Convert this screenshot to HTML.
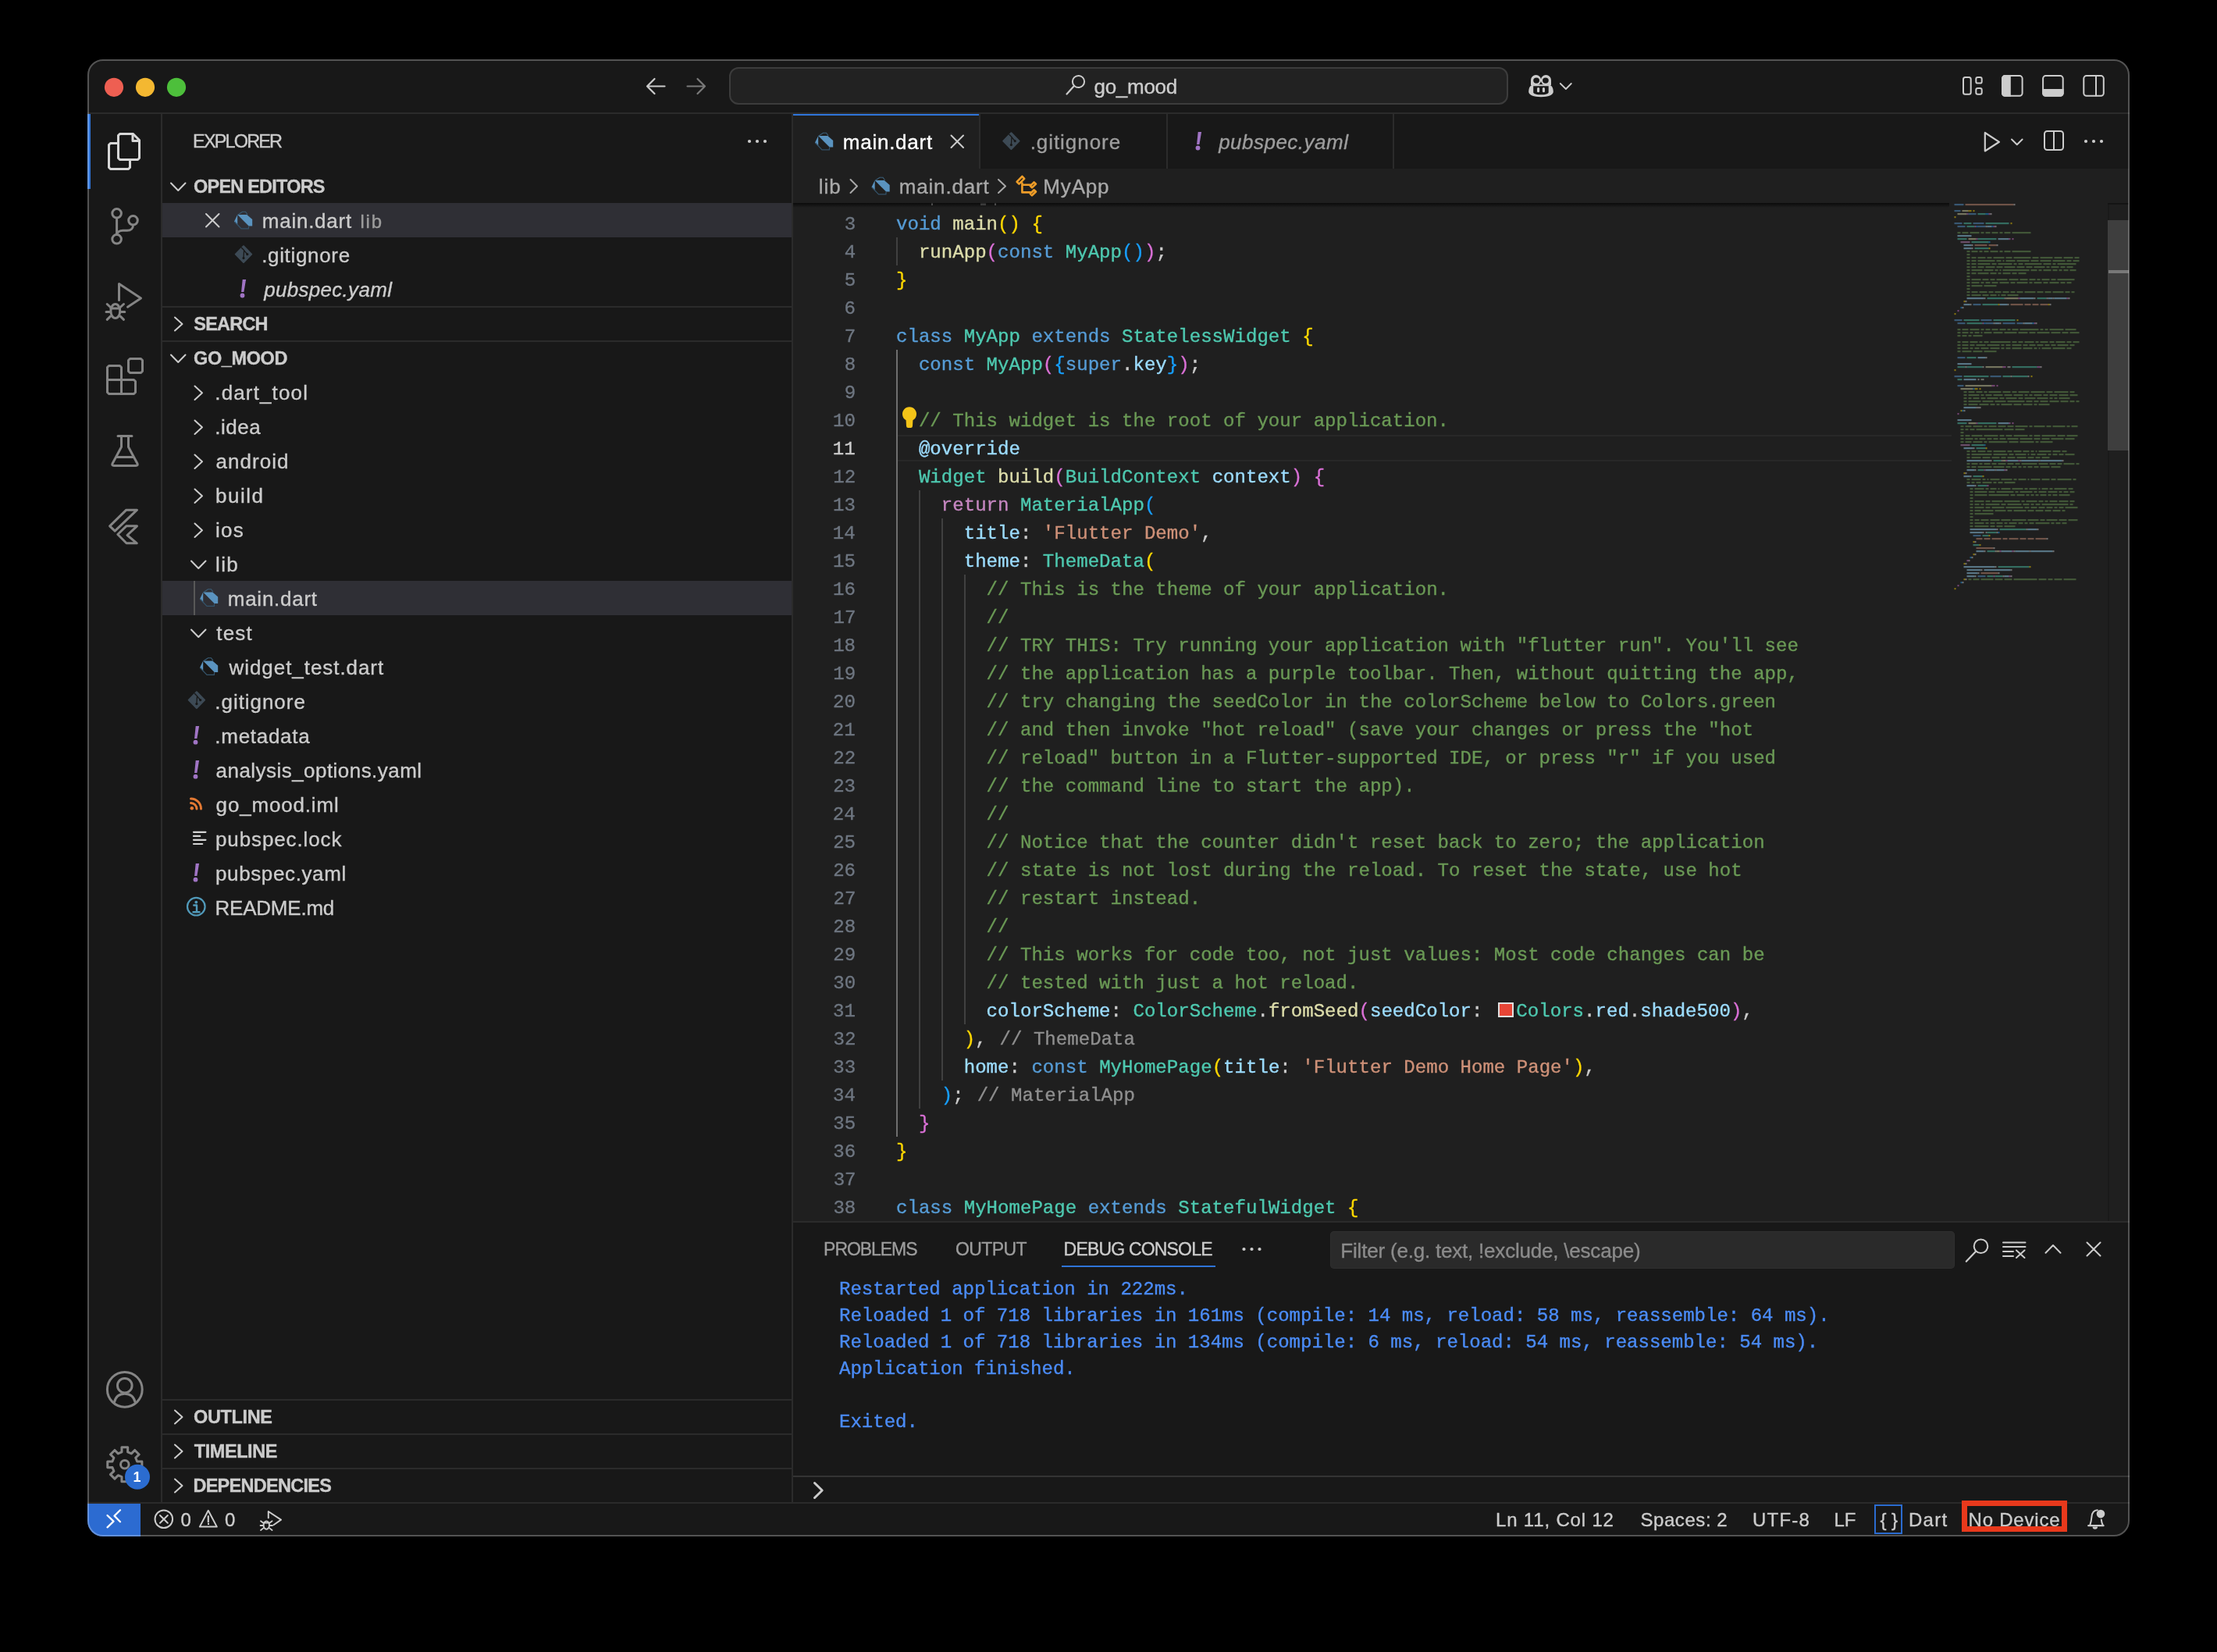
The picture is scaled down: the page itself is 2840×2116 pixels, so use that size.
<!DOCTYPE html><html><head><meta charset="utf-8"><style>

html,body{margin:0;padding:0;background:#000;}
body{width:2840px;height:2116px;overflow:hidden;position:relative;font-kerning:none;}
#win{position:absolute;left:0;top:0;width:2840px;height:2116px;clip-path:inset(76px 112px 148px 112px round 20px);will-change:transform;}
#win div{position:absolute;white-space:pre;}
#ov{position:absolute;left:0;top:0;}
.cd,.cd span{-webkit-text-stroke:0.35px currentColor;}
#bord{position:absolute;left:112px;top:76px;width:2616px;height:1892px;border-radius:20px;box-sizing:border-box;border:2px solid rgba(255,255,255,0.26);}

</style></head><body><div id="win">
<div style="left:112px;top:76px;width:2616px;height:1892px;background:#181818;"></div>
<div style="left:112px;top:144px;width:2616px;height:2px;background:#2B2B2B;"></div>
<div style="left:934px;top:86px;width:994px;height:44px;border:2px solid #3C3C3C;border-radius:12px;background:#222222;box-sizing:content-box"></div>
<div style="left:1401.51px;top:95.50px;font:normal 400 26px/30px 'Liberation Sans', sans-serif;color:#CCCCCC;letter-spacing:-0.275px;-webkit-text-stroke:0.35px #CCCCCC;">go_mood</div>
<div style="left:206px;top:146px;width:2px;height:1778px;background:#2B2B2B;"></div>
<div style="left:112px;top:146px;width:4px;height:96px;background:#2F74D9;"></div>
<div style="left:1014px;top:146px;width:2px;height:1778px;background:#2B2B2B;"></div>
<div style="left:247.07px;top:168.20px;font:normal 400 23.5px/26px 'Liberation Sans', sans-serif;color:#CCCCCC;letter-spacing:-1.853px;-webkit-text-stroke:0.35px #CCCCCC;">EXPLORER</div>
<div style="left:248.04px;top:225.90px;font:normal 700 23.5px/26px 'Liberation Sans', sans-serif;color:#CCCCCC;letter-spacing:-0.791px;-webkit-text-stroke:0.35px #CCCCCC;">OPEN EDITORS</div>
<div style="left:208px;top:260px;width:806px;height:44px;background:#2F2F35;"></div>
<div style="left:335.77px;top:268.00px;font:normal 400 26px/30px 'Liberation Sans', sans-serif;color:#CCCCCC;letter-spacing:0.755px;-webkit-text-stroke:0.35px #CCCCCC;">main.dart</div>
<div style="left:461.38px;top:270.00px;font:normal 400 24px/27px 'Liberation Sans', sans-serif;color:#9D9D9D;letter-spacing:1.807px;-webkit-text-stroke:0.35px #9D9D9D;">lib</div>
<div style="left:335.13px;top:312.00px;font:normal 400 26px/30px 'Liberation Sans', sans-serif;color:#CCCCCC;letter-spacing:0.675px;-webkit-text-stroke:0.35px #CCCCCC;">.gitignore</div>
<div style="left:338.15px;top:356.00px;font:italic 400 26px/30px 'Liberation Sans', sans-serif;color:#CCCCCC;letter-spacing:0.305px;-webkit-text-stroke:0.35px #CCCCCC;">pubspec.yaml</div>
<div style="left:208px;top:392px;width:806px;height:2px;background:#2B2B2B;"></div>
<div style="left:248.32px;top:401.90px;font:normal 700 23.5px/26px 'Liberation Sans', sans-serif;color:#CCCCCC;letter-spacing:-0.794px;-webkit-text-stroke:0.35px #CCCCCC;">SEARCH</div>
<div style="left:208px;top:436px;width:806px;height:2px;background:#2B2B2B;"></div>
<div style="left:248.04px;top:445.90px;font:normal 700 23.5px/26px 'Liberation Sans', sans-serif;color:#CCCCCC;letter-spacing:-0.380px;-webkit-text-stroke:0.35px #CCCCCC;">GO_MOOD</div>
<div style="left:275.33px;top:487.60px;font:normal 400 26px/30px 'Liberation Sans', sans-serif;color:#CCCCCC;letter-spacing:1.134px;-webkit-text-stroke:0.35px #CCCCCC;">.dart_tool</div>
<div style="left:275.33px;top:531.60px;font:normal 400 26px/30px 'Liberation Sans', sans-serif;color:#CCCCCC;letter-spacing:0.499px;-webkit-text-stroke:0.35px #CCCCCC;">.idea</div>
<div style="left:276.60px;top:575.60px;font:normal 400 26px/30px 'Liberation Sans', sans-serif;color:#CCCCCC;letter-spacing:1.008px;-webkit-text-stroke:0.35px #CCCCCC;">android</div>
<div style="left:276.02px;top:619.60px;font:normal 400 26px/30px 'Liberation Sans', sans-serif;color:#CCCCCC;letter-spacing:1.530px;-webkit-text-stroke:0.35px #CCCCCC;">build</div>
<div style="left:275.96px;top:663.60px;font:normal 400 26px/30px 'Liberation Sans', sans-serif;color:#CCCCCC;letter-spacing:1.221px;-webkit-text-stroke:0.35px #CCCCCC;">ios</div>
<div style="left:275.95px;top:707.60px;font:normal 400 26px/30px 'Liberation Sans', sans-serif;color:#CCCCCC;letter-spacing:1.416px;-webkit-text-stroke:0.35px #CCCCCC;">lib</div>
<div style="left:208px;top:744px;width:806px;height:44px;background:#2F2F35;"></div>
<div style="left:248px;top:744px;width:2px;height:44px;background:#585858;"></div>
<div style="left:291.77px;top:751.60px;font:normal 400 26px/30px 'Liberation Sans', sans-serif;color:#CCCCCC;letter-spacing:0.742px;-webkit-text-stroke:0.35px #CCCCCC;">main.dart</div>
<div style="left:277.31px;top:795.60px;font:normal 400 26px/30px 'Liberation Sans', sans-serif;color:#CCCCCC;letter-spacing:1.159px;-webkit-text-stroke:0.35px #CCCCCC;">test</div>
<div style="left:293.54px;top:839.60px;font:normal 400 26px/30px 'Liberation Sans', sans-serif;color:#CCCCCC;letter-spacing:0.940px;-webkit-text-stroke:0.35px #CCCCCC;">widget_test.dart</div>
<div style="left:275.33px;top:883.60px;font:normal 400 26px/30px 'Liberation Sans', sans-serif;color:#CCCCCC;letter-spacing:0.952px;-webkit-text-stroke:0.35px #CCCCCC;">.gitignore</div>
<div style="left:275.33px;top:927.60px;font:normal 400 26px/30px 'Liberation Sans', sans-serif;color:#CCCCCC;letter-spacing:0.718px;-webkit-text-stroke:0.35px #CCCCCC;">.metadata</div>
<div style="left:276.60px;top:971.60px;font:normal 400 26px/30px 'Liberation Sans', sans-serif;color:#CCCCCC;letter-spacing:0.455px;-webkit-text-stroke:0.35px #CCCCCC;">analysis_options.yaml</div>
<div style="left:276.61px;top:1015.60px;font:normal 400 26px/30px 'Liberation Sans', sans-serif;color:#CCCCCC;letter-spacing:0.828px;-webkit-text-stroke:0.35px #CCCCCC;">go_mood.iml</div>
<div style="left:276.02px;top:1059.60px;font:normal 400 26px/30px 'Liberation Sans', sans-serif;color:#CCCCCC;letter-spacing:0.880px;-webkit-text-stroke:0.35px #CCCCCC;">pubspec.lock</div>
<div style="left:276.02px;top:1103.60px;font:normal 400 26px/30px 'Liberation Sans', sans-serif;color:#CCCCCC;letter-spacing:0.618px;-webkit-text-stroke:0.35px #CCCCCC;">pubspec.yaml</div>
<div style="left:275.57px;top:1147.60px;font:normal 400 26px/30px 'Liberation Sans', sans-serif;color:#CCCCCC;letter-spacing:-0.234px;-webkit-text-stroke:0.35px #CCCCCC;">README.md</div>
<div style="left:208px;top:1792px;width:806px;height:2px;background:#2B2B2B;"></div>
<div style="left:248.04px;top:1801.90px;font:normal 700 23.5px/26px 'Liberation Sans', sans-serif;color:#CCCCCC;letter-spacing:-0.375px;-webkit-text-stroke:0.35px #CCCCCC;">OUTLINE</div>
<div style="left:208px;top:1836px;width:806px;height:2px;background:#2B2B2B;"></div>
<div style="left:248.74px;top:1845.90px;font:normal 700 23.5px/26px 'Liberation Sans', sans-serif;color:#CCCCCC;letter-spacing:-0.426px;-webkit-text-stroke:0.35px #CCCCCC;">TIMELINE</div>
<div style="left:208px;top:1880px;width:806px;height:2px;background:#2B2B2B;"></div>
<div style="left:247.43px;top:1889.90px;font:normal 700 23.5px/26px 'Liberation Sans', sans-serif;color:#CCCCCC;letter-spacing:-0.722px;-webkit-text-stroke:0.35px #CCCCCC;">DEPENDENCIES</div>
<div style="left:1016px;top:146px;width:238px;height:70px;background:#1F1F1F;"></div>
<div style="left:1016px;top:146px;width:238px;height:2px;background:#2F74D9;"></div>
<div style="left:1254px;top:146px;width:2px;height:70px;background:#2B2B2B;"></div>
<div style="left:1494px;top:146px;width:2px;height:70px;background:#2B2B2B;"></div>
<div style="left:1784px;top:146px;width:2px;height:70px;background:#2B2B2B;"></div>
<div style="left:1079.77px;top:166.50px;font:normal 400 26px/30px 'Liberation Sans', sans-serif;color:#FFFFFF;letter-spacing:0.755px;-webkit-text-stroke:0.35px #FFFFFF;">main.dart</div>
<div style="left:1319.63px;top:166.50px;font:normal 400 26px/30px 'Liberation Sans', sans-serif;color:#9D9D9D;letter-spacing:0.952px;-webkit-text-stroke:0.35px #9D9D9D;">.gitignore</div>
<div style="left:1561.15px;top:166.50px;font:italic 400 26px/30px 'Liberation Sans', sans-serif;color:#9D9D9D;letter-spacing:0.486px;-webkit-text-stroke:0.35px #9D9D9D;">pubspec.yaml</div>
<div style="left:1016px;top:216px;width:1712px;height:44px;background:#1F1F1F;"></div>
<div style="left:1048.75px;top:224.00px;font:normal 400 26px/30px 'Liberation Sans', sans-serif;color:#A9A9A9;letter-spacing:0.916px;-webkit-text-stroke:0.35px #A9A9A9;">lib</div>
<div style="left:1151.77px;top:224.00px;font:normal 400 26px/30px 'Liberation Sans', sans-serif;color:#A9A9A9;letter-spacing:0.817px;-webkit-text-stroke:0.35px #A9A9A9;">main.dart</div>
<div style="left:1336.37px;top:224.00px;font:normal 400 26px/30px 'Liberation Sans', sans-serif;color:#A9A9A9;letter-spacing:0.826px;-webkit-text-stroke:0.35px #A9A9A9;">MyApp</div>
<div style="left:1016px;top:260px;width:1712px;height:1304px;background:#1F1F1F;"></div>
<div style="left:1148px;top:557px;width:1352px;height:2px;background:#282828;"></div>
<div style="left:1148px;top:589px;width:1352px;height:2px;background:#282828;"></div>
<div style="left:1148px;top:304px;width:2px;height:36px;background:#404040;"></div>
<div style="left:1148px;top:448px;width:2px;height:1008px;background:#6F6F6F;"></div>
<div style="left:1177px;top:628px;width:2px;height:792px;background:#404040;"></div>
<div style="left:1206px;top:664px;width:2px;height:720px;background:#404040;"></div>
<div style="left:1235px;top:736px;width:2px;height:576px;background:#404040;"></div>
<div style="left:1081.77px;top:274.00px;font:normal 400 24.08px/27px 'Liberation Mono', monospace;color:#6E7681;letter-spacing:0.000px;-webkit-text-stroke:0.35px #6E7681;">3</div>
<div style="left:1081.76px;top:310.00px;font:normal 400 24.08px/27px 'Liberation Mono', monospace;color:#6E7681;letter-spacing:0.000px;-webkit-text-stroke:0.35px #6E7681;">4</div>
<div style="left:1081.77px;top:346.00px;font:normal 400 24.08px/27px 'Liberation Mono', monospace;color:#6E7681;letter-spacing:0.000px;-webkit-text-stroke:0.35px #6E7681;">5</div>
<div style="left:1081.54px;top:382.00px;font:normal 400 24.08px/27px 'Liberation Mono', monospace;color:#6E7681;letter-spacing:0.000px;-webkit-text-stroke:0.35px #6E7681;">6</div>
<div style="left:1081.77px;top:418.00px;font:normal 400 24.08px/27px 'Liberation Mono', monospace;color:#6E7681;letter-spacing:0.000px;-webkit-text-stroke:0.35px #6E7681;">7</div>
<div style="left:1081.77px;top:454.00px;font:normal 400 24.08px/27px 'Liberation Mono', monospace;color:#6E7681;letter-spacing:0.000px;-webkit-text-stroke:0.35px #6E7681;">8</div>
<div style="left:1081.76px;top:490.00px;font:normal 400 24.08px/27px 'Liberation Mono', monospace;color:#6E7681;letter-spacing:0.000px;-webkit-text-stroke:0.35px #6E7681;">9</div>
<div style="left:1067.04px;top:526.00px;font:normal 400 24.08px/27px 'Liberation Mono', monospace;color:#6E7681;letter-spacing:0.000px;-webkit-text-stroke:0.35px #6E7681;">10</div>
<div style="left:1066.72px;top:562.00px;font:normal 400 24.08px/27px 'Liberation Mono', monospace;color:#CCCCCC;letter-spacing:0.000px;-webkit-text-stroke:0.35px #CCCCCC;">11</div>
<div style="left:1067.26px;top:598.00px;font:normal 400 24.08px/27px 'Liberation Mono', monospace;color:#6E7681;letter-spacing:0.000px;-webkit-text-stroke:0.35px #6E7681;">12</div>
<div style="left:1067.09px;top:634.00px;font:normal 400 24.08px/27px 'Liberation Mono', monospace;color:#6E7681;letter-spacing:0.000px;-webkit-text-stroke:0.35px #6E7681;">13</div>
<div style="left:1066.78px;top:670.00px;font:normal 400 24.08px/27px 'Liberation Mono', monospace;color:#6E7681;letter-spacing:0.000px;-webkit-text-stroke:0.35px #6E7681;">14</div>
<div style="left:1067.09px;top:706.00px;font:normal 400 24.08px/27px 'Liberation Mono', monospace;color:#6E7681;letter-spacing:0.000px;-webkit-text-stroke:0.35px #6E7681;">15</div>
<div style="left:1067.12px;top:742.00px;font:normal 400 24.08px/27px 'Liberation Mono', monospace;color:#6E7681;letter-spacing:0.000px;-webkit-text-stroke:0.35px #6E7681;">16</div>
<div style="left:1067.44px;top:778.00px;font:normal 400 24.08px/27px 'Liberation Mono', monospace;color:#6E7681;letter-spacing:0.000px;-webkit-text-stroke:0.35px #6E7681;">17</div>
<div style="left:1067.15px;top:814.00px;font:normal 400 24.08px/27px 'Liberation Mono', monospace;color:#6E7681;letter-spacing:0.000px;-webkit-text-stroke:0.35px #6E7681;">18</div>
<div style="left:1067.23px;top:850.00px;font:normal 400 24.08px/27px 'Liberation Mono', monospace;color:#6E7681;letter-spacing:0.000px;-webkit-text-stroke:0.35px #6E7681;">19</div>
<div style="left:1067.09px;top:886.00px;font:normal 400 24.08px/27px 'Liberation Mono', monospace;color:#6E7681;letter-spacing:0.000px;-webkit-text-stroke:0.35px #6E7681;">20</div>
<div style="left:1066.77px;top:922.00px;font:normal 400 24.08px/27px 'Liberation Mono', monospace;color:#6E7681;letter-spacing:0.000px;-webkit-text-stroke:0.35px #6E7681;">21</div>
<div style="left:1067.31px;top:958.00px;font:normal 400 24.08px/27px 'Liberation Mono', monospace;color:#6E7681;letter-spacing:0.000px;-webkit-text-stroke:0.35px #6E7681;">22</div>
<div style="left:1067.13px;top:994.00px;font:normal 400 24.08px/27px 'Liberation Mono', monospace;color:#6E7681;letter-spacing:0.000px;-webkit-text-stroke:0.35px #6E7681;">23</div>
<div style="left:1066.83px;top:1030.00px;font:normal 400 24.08px/27px 'Liberation Mono', monospace;color:#6E7681;letter-spacing:0.000px;-webkit-text-stroke:0.35px #6E7681;">24</div>
<div style="left:1067.13px;top:1066.00px;font:normal 400 24.08px/27px 'Liberation Mono', monospace;color:#6E7681;letter-spacing:0.000px;-webkit-text-stroke:0.35px #6E7681;">25</div>
<div style="left:1067.17px;top:1102.00px;font:normal 400 24.08px/27px 'Liberation Mono', monospace;color:#6E7681;letter-spacing:0.000px;-webkit-text-stroke:0.35px #6E7681;">26</div>
<div style="left:1067.49px;top:1138.00px;font:normal 400 24.08px/27px 'Liberation Mono', monospace;color:#6E7681;letter-spacing:0.000px;-webkit-text-stroke:0.35px #6E7681;">27</div>
<div style="left:1067.19px;top:1174.00px;font:normal 400 24.08px/27px 'Liberation Mono', monospace;color:#6E7681;letter-spacing:0.000px;-webkit-text-stroke:0.35px #6E7681;">28</div>
<div style="left:1067.28px;top:1210.00px;font:normal 400 24.08px/27px 'Liberation Mono', monospace;color:#6E7681;letter-spacing:0.000px;-webkit-text-stroke:0.35px #6E7681;">29</div>
<div style="left:1067.28px;top:1246.00px;font:normal 400 24.08px/27px 'Liberation Mono', monospace;color:#6E7681;letter-spacing:0.000px;-webkit-text-stroke:0.35px #6E7681;">30</div>
<div style="left:1066.96px;top:1282.00px;font:normal 400 24.08px/27px 'Liberation Mono', monospace;color:#6E7681;letter-spacing:0.000px;-webkit-text-stroke:0.35px #6E7681;">31</div>
<div style="left:1067.50px;top:1318.00px;font:normal 400 24.08px/27px 'Liberation Mono', monospace;color:#6E7681;letter-spacing:0.000px;-webkit-text-stroke:0.35px #6E7681;">32</div>
<div style="left:1067.32px;top:1354.00px;font:normal 400 24.08px/27px 'Liberation Mono', monospace;color:#6E7681;letter-spacing:0.000px;-webkit-text-stroke:0.35px #6E7681;">33</div>
<div style="left:1067.02px;top:1390.00px;font:normal 400 24.08px/27px 'Liberation Mono', monospace;color:#6E7681;letter-spacing:0.000px;-webkit-text-stroke:0.35px #6E7681;">34</div>
<div style="left:1067.32px;top:1426.00px;font:normal 400 24.08px/27px 'Liberation Mono', monospace;color:#6E7681;letter-spacing:0.000px;-webkit-text-stroke:0.35px #6E7681;">35</div>
<div style="left:1067.36px;top:1462.00px;font:normal 400 24.08px/27px 'Liberation Mono', monospace;color:#6E7681;letter-spacing:0.000px;-webkit-text-stroke:0.35px #6E7681;">36</div>
<div style="left:1067.68px;top:1498.00px;font:normal 400 24.08px/27px 'Liberation Mono', monospace;color:#6E7681;letter-spacing:0.000px;-webkit-text-stroke:0.35px #6E7681;">37</div>
<div style="left:1067.38px;top:1534.00px;font:normal 400 24.08px/27px 'Liberation Mono', monospace;color:#6E7681;letter-spacing:0.000px;-webkit-text-stroke:0.35px #6E7681;">38</div>
<div class="cd" style="left:1148.0px;top:274.0px;font:400 24.08px/27px 'Liberation Mono', monospace;color:#CCCCCC"><span style="color:#569CD6">void</span> <span style="color:#DCDCAA">main</span><span style="color:#FFD700">(</span><span style="color:#FFD700">)</span> <span style="color:#FFD700">{</span></div>
<div class="cd" style="left:1148.0px;top:310.0px;font:400 24.08px/27px 'Liberation Mono', monospace;color:#CCCCCC">  <span style="color:#DCDCAA">runApp</span><span style="color:#DA70D6">(</span><span style="color:#569CD6">const</span> <span style="color:#4EC9B0">MyApp</span><span style="color:#179FFF">(</span><span style="color:#179FFF">)</span><span style="color:#DA70D6">)</span><span style="color:#CCCCCC">;</span></div>
<div class="cd" style="left:1148.0px;top:346.0px;font:400 24.08px/27px 'Liberation Mono', monospace;color:#CCCCCC"><span style="color:#FFD700">}</span></div>
<div class="cd" style="left:1148.0px;top:382.0px;font:400 24.08px/27px 'Liberation Mono', monospace;color:#CCCCCC"></div>
<div class="cd" style="left:1148.0px;top:418.0px;font:400 24.08px/27px 'Liberation Mono', monospace;color:#CCCCCC"><span style="color:#569CD6">class</span> <span style="color:#4EC9B0">MyApp</span> <span style="color:#569CD6">extends</span> <span style="color:#4EC9B0">StatelessWidget</span> <span style="color:#FFD700">{</span></div>
<div class="cd" style="left:1148.0px;top:454.0px;font:400 24.08px/27px 'Liberation Mono', monospace;color:#CCCCCC">  <span style="color:#569CD6">const</span> <span style="color:#4EC9B0">MyApp</span><span style="color:#DA70D6">(</span><span style="color:#179FFF">{</span><span style="color:#569CD6">super</span><span style="color:#CCCCCC">.</span><span style="color:#9CDCFE">key</span><span style="color:#179FFF">}</span><span style="color:#DA70D6">)</span><span style="color:#CCCCCC">;</span></div>
<div class="cd" style="left:1148.0px;top:490.0px;font:400 24.08px/27px 'Liberation Mono', monospace;color:#CCCCCC"></div>
<div class="cd" style="left:1148.0px;top:526.0px;font:400 24.08px/27px 'Liberation Mono', monospace;color:#CCCCCC">  <span style="color:#6A9955">// This widget is the root of your application.</span></div>
<div class="cd" style="left:1148.0px;top:562.0px;font:400 24.08px/27px 'Liberation Mono', monospace;color:#CCCCCC">  <span style="color:#9CDCFE">@override</span></div>
<div class="cd" style="left:1148.0px;top:598.0px;font:400 24.08px/27px 'Liberation Mono', monospace;color:#CCCCCC">  <span style="color:#4EC9B0">Widget</span> <span style="color:#DCDCAA">build</span><span style="color:#DA70D6">(</span><span style="color:#4EC9B0">BuildContext</span> <span style="color:#9CDCFE">context</span><span style="color:#DA70D6">)</span> <span style="color:#DA70D6">{</span></div>
<div class="cd" style="left:1148.0px;top:634.0px;font:400 24.08px/27px 'Liberation Mono', monospace;color:#CCCCCC">    <span style="color:#C586C0">return</span> <span style="color:#4EC9B0">MaterialApp</span><span style="color:#179FFF">(</span></div>
<div class="cd" style="left:1148.0px;top:670.0px;font:400 24.08px/27px 'Liberation Mono', monospace;color:#CCCCCC">      <span style="color:#9CDCFE">title</span><span style="color:#CCCCCC">:</span> <span style="color:#CE9178">'Flutter Demo'</span><span style="color:#CCCCCC">,</span></div>
<div class="cd" style="left:1148.0px;top:706.0px;font:400 24.08px/27px 'Liberation Mono', monospace;color:#CCCCCC">      <span style="color:#9CDCFE">theme</span><span style="color:#CCCCCC">:</span> <span style="color:#4EC9B0">ThemeData</span><span style="color:#FFD700">(</span></div>
<div class="cd" style="left:1148.0px;top:742.0px;font:400 24.08px/27px 'Liberation Mono', monospace;color:#CCCCCC">        <span style="color:#6A9955">// This is the theme of your application.</span></div>
<div class="cd" style="left:1148.0px;top:778.0px;font:400 24.08px/27px 'Liberation Mono', monospace;color:#CCCCCC">        <span style="color:#6A9955">//</span></div>
<div class="cd" style="left:1148.0px;top:814.0px;font:400 24.08px/27px 'Liberation Mono', monospace;color:#CCCCCC">        <span style="color:#6A9955">// TRY THIS: Try running your application with "flutter run". You'll see</span></div>
<div class="cd" style="left:1148.0px;top:850.0px;font:400 24.08px/27px 'Liberation Mono', monospace;color:#CCCCCC">        <span style="color:#6A9955">// the application has a purple toolbar. Then, without quitting the app,</span></div>
<div class="cd" style="left:1148.0px;top:886.0px;font:400 24.08px/27px 'Liberation Mono', monospace;color:#CCCCCC">        <span style="color:#6A9955">// try changing the seedColor in the colorScheme below to Colors.green</span></div>
<div class="cd" style="left:1148.0px;top:922.0px;font:400 24.08px/27px 'Liberation Mono', monospace;color:#CCCCCC">        <span style="color:#6A9955">// and then invoke "hot reload" (save your changes or press the "hot</span></div>
<div class="cd" style="left:1148.0px;top:958.0px;font:400 24.08px/27px 'Liberation Mono', monospace;color:#CCCCCC">        <span style="color:#6A9955">// reload" button in a Flutter-supported IDE, or press "r" if you used</span></div>
<div class="cd" style="left:1148.0px;top:994.0px;font:400 24.08px/27px 'Liberation Mono', monospace;color:#CCCCCC">        <span style="color:#6A9955">// the command line to start the app).</span></div>
<div class="cd" style="left:1148.0px;top:1030.0px;font:400 24.08px/27px 'Liberation Mono', monospace;color:#CCCCCC">        <span style="color:#6A9955">//</span></div>
<div class="cd" style="left:1148.0px;top:1066.0px;font:400 24.08px/27px 'Liberation Mono', monospace;color:#CCCCCC">        <span style="color:#6A9955">// Notice that the counter didn't reset back to zero; the application</span></div>
<div class="cd" style="left:1148.0px;top:1102.0px;font:400 24.08px/27px 'Liberation Mono', monospace;color:#CCCCCC">        <span style="color:#6A9955">// state is not lost during the reload. To reset the state, use hot</span></div>
<div class="cd" style="left:1148.0px;top:1138.0px;font:400 24.08px/27px 'Liberation Mono', monospace;color:#CCCCCC">        <span style="color:#6A9955">// restart instead.</span></div>
<div class="cd" style="left:1148.0px;top:1174.0px;font:400 24.08px/27px 'Liberation Mono', monospace;color:#CCCCCC">        <span style="color:#6A9955">//</span></div>
<div class="cd" style="left:1148.0px;top:1210.0px;font:400 24.08px/27px 'Liberation Mono', monospace;color:#CCCCCC">        <span style="color:#6A9955">// This works for code too, not just values: Most code changes can be</span></div>
<div class="cd" style="left:1148.0px;top:1246.0px;font:400 24.08px/27px 'Liberation Mono', monospace;color:#CCCCCC">        <span style="color:#6A9955">// tested with just a hot reload.</span></div>
<div class="cd" style="left:1148.0px;top:1282.0px;font:400 24.08px/27px 'Liberation Mono', monospace;color:#CCCCCC">        <span style="color:#9CDCFE">colorScheme</span><span style="color:#CCCCCC">:</span> <span style="color:#4EC9B0">ColorScheme</span><span style="color:#CCCCCC">.</span><span style="color:#DCDCAA">fromSeed</span><span style="color:#DA70D6">(</span><span style="color:#9CDCFE">seedColor</span><span style="color:#CCCCCC">:</span> </div>
<div style="left:1918.6px;top:1283.5px;width:20.200000000000045px;height:19.0px;background:#E74536;border:2px solid #E0E0E0;box-sizing:border-box"></div>
<div class="cd" style="left:1942.35px;top:1282.0px;font:400 24.08px/27px 'Liberation Mono', monospace;color:#CCCCCC"><span style="color:#4EC9B0">Colors</span><span style="color:#CCCCCC">.</span><span style="color:#9CDCFE">red</span><span style="color:#CCCCCC">.</span><span style="color:#9CDCFE">shade500</span><span style="color:#DA70D6">)</span><span style="color:#CCCCCC">,</span></div>
<div class="cd" style="left:1148.0px;top:1318.0px;font:400 24.08px/27px 'Liberation Mono', monospace;color:#CCCCCC">      <span style="color:#FFD700">)</span><span style="color:#CCCCCC">,</span> <span style="color:#8F8F8F;margin-left:2.5px">// ThemeData</span></div>
<div class="cd" style="left:1148.0px;top:1354.0px;font:400 24.08px/27px 'Liberation Mono', monospace;color:#CCCCCC">      <span style="color:#9CDCFE">home</span><span style="color:#CCCCCC">:</span> <span style="color:#569CD6">const</span> <span style="color:#4EC9B0">MyHomePage</span><span style="color:#FFD700">(</span><span style="color:#9CDCFE">title</span><span style="color:#CCCCCC">:</span> <span style="color:#CE9178">'Flutter Demo Home Page'</span><span style="color:#FFD700">)</span><span style="color:#CCCCCC">,</span></div>
<div class="cd" style="left:1148.0px;top:1390.0px;font:400 24.08px/27px 'Liberation Mono', monospace;color:#CCCCCC">    <span style="color:#179FFF">)</span><span style="color:#CCCCCC">;</span> <span style="color:#8F8F8F;margin-left:2.5px">// MaterialApp</span></div>
<div class="cd" style="left:1148.0px;top:1426.0px;font:400 24.08px/27px 'Liberation Mono', monospace;color:#CCCCCC">  <span style="color:#DA70D6">}</span></div>
<div class="cd" style="left:1148.0px;top:1462.0px;font:400 24.08px/27px 'Liberation Mono', monospace;color:#CCCCCC"><span style="color:#FFD700">}</span></div>
<div class="cd" style="left:1148.0px;top:1498.0px;font:400 24.08px/27px 'Liberation Mono', monospace;color:#CCCCCC"></div>
<div class="cd" style="left:1148.0px;top:1534.0px;font:400 24.08px/27px 'Liberation Mono', monospace;color:#CCCCCC"><span style="color:#569CD6">class</span> <span style="color:#4EC9B0">MyHomePage</span> <span style="color:#569CD6">extends</span> <span style="color:#4EC9B0">StatefulWidget</span> <span style="color:#FFD700">{</span></div>
<div style="left:1163.2px;top:541.2px;width:3.599999999999909px;height:4.599999999999909px;background:#1F1F1F;"></div>
<div style="left:1192.5px;top:260px;width:2.0px;height:3px;background:#8A8A8A;"></div>
<div style="left:1256px;top:260px;width:7px;height:2.5px;background:#6A6A6A;"></div>
<div style="left:1273.5px;top:260px;width:2.0px;height:3px;background:#8A8A8A;"></div>
<div style="left:1016px;top:260px;width:1481px;height:6px;background:linear-gradient(#000000aa,#00000000)"></div>
<div style="left:2700px;top:260px;width:1.5px;height:1304px;background:#1A1A1A;"></div>
<div style="left:2700px;top:260px;width:27px;height:1.5px;background:#141414;"></div>
<div style="left:2700px;top:281.8px;width:27px;height:295.2px;background:#3E3E3E;"></div>
<div style="left:2701px;top:346px;width:26px;height:4px;background:#787878;"></div>
<div style="left:1016px;top:1564px;width:1712px;height:2px;background:#2B2B2B;"></div>
<div style="left:1016px;top:1566px;width:1712px;height:358px;background:#181818;"></div>
<div style="left:1055.11px;top:1587.20px;font:normal 400 23px/26px 'Liberation Sans', sans-serif;color:#9D9D9D;letter-spacing:-1.053px;-webkit-text-stroke:0.35px #9D9D9D;">PROBLEMS</div>
<div style="left:1223.91px;top:1587.20px;font:normal 400 23px/26px 'Liberation Sans', sans-serif;color:#9D9D9D;letter-spacing:-0.586px;-webkit-text-stroke:0.35px #9D9D9D;">OUTPUT</div>
<div style="left:1362.61px;top:1587.20px;font:normal 400 23px/26px 'Liberation Sans', sans-serif;color:#CCCCCC;letter-spacing:-0.815px;-webkit-text-stroke:0.35px #CCCCCC;">DEBUG CONSOLE</div>
<div style="left:1360px;top:1621px;width:197px;height:2px;background:#2F74D9;"></div>
<div style="left:1704px;top:1577px;width:800px;height:48px;background:#2A2A2A;border-radius:5px;box-shadow:inset 0 0 0 1px #2F2F2F"></div>
<div style="left:1717.37px;top:1586.50px;font:normal 400 26px/30px 'Liberation Sans', sans-serif;color:#8B8B8B;letter-spacing:-0.205px;-webkit-text-stroke:0.35px #8B8B8B;">Filter (e.g. text, !exclude, \escape)</div>
<div class="cd" style="left:1075px;top:1638.4px;font:400 24.08px/27px 'Liberation Mono', monospace;color:#4B8CF7;letter-spacing:-0.034px">Restarted application in 222ms.</div>
<div class="cd" style="left:1075px;top:1672.2px;font:400 24.08px/27px 'Liberation Mono', monospace;color:#4B8CF7;letter-spacing:-0.034px">Reloaded 1 of 718 libraries in 161ms (compile: 14 ms, reload: 58 ms, reassemble: 64 ms).</div>
<div class="cd" style="left:1075px;top:1706.0px;font:400 24.08px/27px 'Liberation Mono', monospace;color:#4B8CF7;letter-spacing:-0.034px">Reloaded 1 of 718 libraries in 134ms (compile: 6 ms, reload: 54 ms, reassemble: 54 ms).</div>
<div class="cd" style="left:1075px;top:1740.0px;font:400 24.08px/27px 'Liberation Mono', monospace;color:#4B8CF7;letter-spacing:-0.034px">Application finished.</div>
<div class="cd" style="left:1075px;top:1807.6px;font:400 24.08px/27px 'Liberation Mono', monospace;color:#4B8CF7;letter-spacing:-0.034px">Exited.</div>
<div style="left:1016px;top:1890px;width:1712px;height:2px;background:#333333;"></div>
<div style="left:112px;top:1924px;width:2616px;height:2px;background:#2B2B2B;"></div>
<div style="left:112px;top:1926px;width:68px;height:42px;background:#2C6BD1;"></div>
<div style="left:231.56px;top:1933.20px;font:normal 400 24px/27px 'Liberation Sans', sans-serif;color:#CCCCCC;letter-spacing:0.000px;-webkit-text-stroke:0.35px #CCCCCC;">0</div>
<div style="left:265.7px;top:1951.2px;width:2.3000000000000114px;height:2.2999999999999545px;background:#CCCCCC;"></div>
<div style="left:288.06px;top:1933.20px;font:normal 400 24px/27px 'Liberation Sans', sans-serif;color:#CCCCCC;letter-spacing:0.000px;-webkit-text-stroke:0.35px #CCCCCC;">0</div>
<div style="left:1916.03px;top:1933.20px;font:normal 400 24px/27px 'Liberation Sans', sans-serif;color:#CCCCCC;letter-spacing:0.826px;-webkit-text-stroke:0.35px #CCCCCC;">Ln 11, Col 12</div>
<div style="left:2101.41px;top:1933.20px;font:normal 400 24px/27px 'Liberation Sans', sans-serif;color:#CCCCCC;letter-spacing:0.570px;-webkit-text-stroke:0.35px #CCCCCC;">Spaces: 2</div>
<div style="left:2244.95px;top:1933.20px;font:normal 400 24px/27px 'Liberation Sans', sans-serif;color:#CCCCCC;letter-spacing:1.226px;-webkit-text-stroke:0.35px #CCCCCC;">UTF-8</div>
<div style="left:2349.53px;top:1933.20px;font:normal 400 24px/27px 'Liberation Sans', sans-serif;color:#CCCCCC;letter-spacing:-0.078px;-webkit-text-stroke:0.35px #CCCCCC;">LF</div>
<div style="left:2401.4px;top:1926.5px;width:35.5px;height:38.8px;border:2px solid #2B6CD0;box-sizing:border-box"></div>
<div style="left:2408.60px;top:1932.70px;font:normal 400 24px/27px 'Liberation Sans', sans-serif;color:#CCCCCC;letter-spacing:-0.184px;-webkit-text-stroke:0.35px #CCCCCC;">{ }</div>
<div style="left:2445.03px;top:1933.20px;font:normal 400 24px/27px 'Liberation Sans', sans-serif;color:#CCCCCC;letter-spacing:1.268px;-webkit-text-stroke:0.35px #CCCCCC;">Dart</div>
<div style="left:2521.53px;top:1933.20px;font:normal 400 24px/27px 'Liberation Sans', sans-serif;color:#CCCCCC;letter-spacing:0.791px;-webkit-text-stroke:0.35px #CCCCCC;">No Device</div>
<div style="left:2512.7px;top:1921.5px;width:135px;height:40.7px;border:7px solid #E8391C;box-sizing:border-box;z-index:5"></div>
<svg id="ov" width="2840" height="2116" viewBox="0 0 2840 2116">
<circle cx="146" cy="111.8" r="12.1" fill="#EE5F52"/>
<circle cx="186" cy="111.8" r="12.1" fill="#F4B831"/>
<circle cx="226" cy="111.8" r="12.1" fill="#4DBF3B"/>
<path d="M829,110.5 H851.5 M838.5,101 L829,110.5 L838.5,120" stroke="#CCCCCC" stroke-width="2.2" fill="none" stroke-linecap="round" stroke-linejoin="round" stroke-linecap="butt"/>
<path d="M880.5,110.5 H903 M893.5,101 L903,110.5 L893.5,120" stroke="#7A7A7A" stroke-width="2.2" fill="none" stroke-linecap="round" stroke-linejoin="round" stroke-linecap="butt"/>
<circle cx="1381.5" cy="104.5" r="7.6" stroke="#CCCCCC" stroke-width="2" fill="none"/>
<path d="M1376,110 L1366.5,120.5" stroke="#CCCCCC" stroke-width="2.2" fill="none" stroke-linecap="round" stroke-linejoin="round" />
<path d="M1961,103 H1964.5 V109 H1961 Z" fill="#CCCCCC" />
<path d="M1983.5,103 H1987 V109 H1983.5 Z" fill="#CCCCCC" />
<path d="M1958.2,117.5 C1958.2,112 1960.5,109.5 1963.5,108.2 L1984.5,108.2 C1987.5,109.5 1989.8,112 1989.8,117.5 C1989.8,121.8 1983,124.2 1974,124.2 C1965,124.2 1958.2,121.8 1958.2,117.5 Z" fill="#CCCCCC" />
<ellipse cx="1967.6" cy="102.6" rx="6.6" ry="6.5" fill="#CCCCCC"/>
<ellipse cx="1980.4" cy="102.6" rx="6.6" ry="6.5" fill="#CCCCCC"/>
<ellipse cx="1968.1" cy="103.1" rx="3.9" ry="3.6" fill="#181818"/>
<ellipse cx="1979.9" cy="103.1" rx="3.9" ry="3.6" fill="#181818"/>
<path d="M1964.2,110.3 H1983.7 V118.2 C1983.7,120.3 1979,121.3 1974,121.3 C1969,121.3 1964.2,120.3 1964.2,118.2 Z" fill="#181818" />
<rect x="1969" y="112" width="3.1" height="6.2" rx="1.5" fill="#CCCCCC"/>
<rect x="1975.9" y="112" width="3.1" height="6.2" rx="1.5" fill="#CCCCCC"/>
<path d="M1998.8,107 L2005.9,114 L2012.8,107" stroke="#CCCCCC" stroke-width="1.8" fill="none" stroke-linecap="round" stroke-linejoin="round" />
<rect x="2515" y="98.9" width="9.699999999999818" height="21.89999999999999" rx="2.5" stroke="#CCCCCC" stroke-width="2" fill="none"/>
<rect x="2531.3" y="99.1" width="7.399999999999636" height="7.5" rx="2.2" stroke="#CCCCCC" stroke-width="2" fill="none"/>
<rect x="2531.3" y="113.1" width="7.399999999999636" height="7.700000000000003" rx="2.2" stroke="#CCCCCC" stroke-width="2" fill="none"/>
<rect x="2565" y="97.1" width="25.59999999999991" height="25.700000000000003" rx="3.5" stroke="#CCCCCC" stroke-width="2" fill="none"/>
<path d="M2568.5,96.1 H2575.8 V123.8 H2568.5 A4.5,4.5 0 0 1 2564,119.3 V100.6 A4.5,4.5 0 0 1 2568.5,96.1 Z" fill="#CCCCCC" />
<rect x="2617.1" y="97.1" width="25.59999999999991" height="25.700000000000003" rx="3.5" stroke="#CCCCCC" stroke-width="2" fill="none"/>
<path d="M2616.1,113.9 H2643.7 V119.3 A4.5,4.5 0 0 1 2639.2,123.8 H2620.6 A4.5,4.5 0 0 1 2616.1,119.3 Z" fill="#CCCCCC" />
<rect x="2669.3" y="97.1" width="25.5" height="25.700000000000003" rx="3.5" stroke="#CCCCCC" stroke-width="2" fill="none"/>
<path d="M2685,97.5 V122.5" stroke="#CCCCCC" stroke-width="2" fill="none" stroke-linecap="round" stroke-linejoin="round" stroke-linecap="butt"/>
<path d="M153.5,171.5 H170.5 L178.5,179.5 V202.5 L176.5,204.5 H153.5 L151.5,202.5 V173.5 Z" stroke="#D7D7D7" stroke-width="3" fill="none" stroke-linecap="round" stroke-linejoin="round" stroke-linejoin="miter"/>
<path d="M170,172 V180.5 H178" stroke="#D7D7D7" stroke-width="3" fill="none" stroke-linecap="round" stroke-linejoin="round" stroke-linejoin="miter" stroke-linecap="butt"/>
<path d="M151.5,183.5 H141.5 L139.5,185.5 V214.5 L141.5,216.5 H164.5 L166.5,214.5 V205" stroke="#D7D7D7" stroke-width="3" fill="none" stroke-linecap="round" stroke-linejoin="round" stroke-linejoin="miter" stroke-linecap="butt"/>
<circle cx="149.6" cy="273.3" r="5.8" stroke="#858585" stroke-width="3" fill="none"/>
<circle cx="170.5" cy="282.3" r="5.8" stroke="#858585" stroke-width="3" fill="none"/>
<circle cx="149.6" cy="306.3" r="5.8" stroke="#858585" stroke-width="3" fill="none"/>
<path d="M149.6,279.3 V300.3" stroke="#858585" stroke-width="3" fill="none" stroke-linecap="round" stroke-linejoin="round" stroke-linecap="butt"/>
<path d="M170.5,288.3 C170.5,292.5 167.5,295.3 163,295.3 H157.5 C153,295.3 149.6,297.5 149.6,300.5" stroke="#858585" stroke-width="3" fill="none" stroke-linecap="round" stroke-linejoin="round" stroke-linecap="butt"/>
<path d="M152.5,384.5 V363.5 L180.5,382 L163.5,393.2" stroke="#858585" stroke-width="3" fill="none" stroke-linecap="round" stroke-linejoin="round" stroke-linejoin="miter" stroke-linecap="butt"/>
<ellipse cx="147.8" cy="398.5" rx="5.9" ry="9" stroke="#858585" stroke-width="3" fill="none"/>
<path d="M142,395 H153.5" stroke="#858585" stroke-width="3" fill="none" stroke-linecap="round" stroke-linejoin="round" stroke-linecap="butt"/>
<path d="M137.2,389.5 L141.5,393.5 M158.5,389.5 L154.2,393.5 M136,399.5 H140 M155.6,399.5 H159.8 M137.2,409.3 L141.5,405.2 M158.5,409.3 L154.2,405.2" stroke="#858585" stroke-width="3" fill="none" stroke-linecap="round" stroke-linejoin="round" stroke-linecap="butt"/>
<path d="M137.5,470.5 L139.5,468.5 H153.5 L155.5,470.5 V486.5 H171.5 L173.5,488.5 V502.5 L171.5,504.5 H139.5 L137.5,502.5 Z M137.5,486.5 H155.5 V504.5" stroke="#858585" stroke-width="3" fill="none" stroke-linecap="round" stroke-linejoin="round" stroke-linejoin="miter" stroke-linecap="butt"/>
<path d="M166.5,459.5 H180.5 L182.5,461.5 V475.5 L180.5,477.5 H166.5 L164.5,475.5 V461.5 Z" stroke="#858585" stroke-width="3" fill="none" stroke-linecap="round" stroke-linejoin="round" stroke-linejoin="miter"/>
<path d="M151,558.5 H169 M155.5,558.5 V572.5 L144.2,593.5 Q142.8,596.5 146,596.5 H174 Q177.2,596.5 175.8,593.5 L164.5,572.5 V558.5 M149.3,585.5 H170.8" stroke="#858585" stroke-width="3" fill="none" stroke-linecap="round" stroke-linejoin="round" stroke-linecap="butt"/>
<path d="M161.8,653.2 H175.5 L147.2,680.2 L140.6,673.8 Z" stroke="#858585" stroke-width="3" fill="none" stroke-linecap="round" stroke-linejoin="round" stroke-linejoin="miter"/>
<path d="M161.8,673.8 H175.5 L163,685.5 L175.3,695.8 H162 L150.8,684.5 Z" stroke="#858585" stroke-width="3" fill="none" stroke-linecap="round" stroke-linejoin="round" stroke-linejoin="miter"/>
<circle cx="159.8" cy="1779.8" r="22.4" stroke="#858585" stroke-width="3" fill="none"/>
<circle cx="159.8" cy="1774.7" r="9.3" stroke="#858585" stroke-width="3" fill="none"/>
<path d="M146.3,1796.5 C148,1789 153,1785.3 159.8,1785.3 C166.6,1785.3 171.6,1789 173.3,1796.5" stroke="#858585" stroke-width="3" fill="none" stroke-linecap="round" stroke-linejoin="round" stroke-linecap="butt"/>
<path d="M155.99,1859.95 L155.91,1853.74 L163.69,1853.74 L163.61,1859.95 L168.32,1861.90 L172.65,1857.45 L178.15,1862.95 L173.70,1867.28 L175.65,1871.99 L181.86,1871.91 L181.86,1879.69 L175.65,1879.61 L173.70,1884.32 L178.15,1888.65 L172.65,1894.15 L168.32,1889.70 L163.61,1891.65 L163.69,1897.86 L155.91,1897.86 L155.99,1891.65 L151.28,1889.70 L146.95,1894.15 L141.45,1888.65 L145.90,1884.32 L143.95,1879.61 L137.74,1879.69 L137.74,1871.91 L143.95,1871.99 L145.90,1867.28 L141.45,1862.95 L146.95,1857.45 L151.28,1861.90 Z" stroke="#858585" stroke-width="3" fill="none" stroke-linecap="round" stroke-linejoin="round" stroke-linejoin="miter"/>
<circle cx="159.8" cy="1875.8" r="5.3" stroke="#858585" stroke-width="3" fill="none"/>
<circle cx="176" cy="1891.8" r="16" fill="#2B6CD0"/>
<text x="170.6" y="1898" font-family="Liberation Sans" font-weight="700" font-size="18" fill="#FFFFFF">1</text>
<circle cx="960" cy="181" r="2.1" fill="#CCCCCC"/>
<circle cx="970" cy="181" r="2.1" fill="#CCCCCC"/>
<circle cx="980" cy="181" r="2.1" fill="#CCCCCC"/>
<path d="M219,234.5 L228.25,244 L237.5,234.5" stroke="#CCCCCC" stroke-width="2" fill="none" stroke-linecap="round" stroke-linejoin="round" stroke-linecap="butt" stroke-linejoin="miter"/>
<path d="M264,274 L280.5,290.5 M280.5,274 L264,290.5" stroke="#CCCCCC" stroke-width="2" fill="none" stroke-linecap="round" stroke-linejoin="round" stroke-linecap="butt"/>
<g transform="translate(-744,101.8)"><path d="M1048.2,173.3 L1060.3,173.3 L1067.2,179.3 L1067.2,187.8 L1062.6,187.8 Z" fill="#5A93BF"/><path d="M1048.2,173.3 L1044,182 L1048.2,186.2 Z" fill="#5A93BF"/><path d="M1044.6,182.2 L1053,191 L1062.4,191 L1062.6,187.8" stroke="#34536A" stroke-width="1.2" fill="none"/><path d="M1048.5,173.5 L1054.5,169.5 L1058.5,169.5 L1061,173" stroke="#3A5E78" stroke-width="1.1" fill="none"/></g>
<g transform="translate(-983.4,145)"><path d="M1295.4,170.2 L1305.6,180.6 L1295.4,191 L1285.2,180.6 Z" fill="#3D4A55" stroke="#3D4A55" stroke-width="2" stroke-linejoin="round"/><path d="M1292.5,172 L1296,175.6 L1295.4,185.5 M1296,175.6 L1300,180.5" stroke="#181818" stroke-width="1.3" fill="none"/><circle cx="1295.4" cy="185.6" r="1.6" fill="#181818"/><circle cx="1300.2" cy="180.7" r="1.6" fill="#181818"/></g>
<path d="M310.7,357.9 H315.1 L312.4,373.9 H309.1 Z" fill="#A074C4" />
<circle cx="310.5" cy="378.5" r="2.9" fill="#A074C4"/>
<path d="M224,406.5 L233.5,415.0 L224,423.5" stroke="#CCCCCC" stroke-width="2" fill="none" stroke-linecap="round" stroke-linejoin="round" stroke-linecap="butt" stroke-linejoin="miter"/>
<path d="M219,454.5 L228.25,464 L237.5,454.5" stroke="#CCCCCC" stroke-width="2" fill="none" stroke-linecap="round" stroke-linejoin="round" stroke-linecap="butt" stroke-linejoin="miter"/>
<path d="M249.5,494.5 L259,503.25 L249.5,512" stroke="#CCCCCC" stroke-width="2" fill="none" stroke-linecap="round" stroke-linejoin="round" stroke-linecap="butt" stroke-linejoin="miter"/>
<path d="M249.5,538.5 L259,547.25 L249.5,556" stroke="#CCCCCC" stroke-width="2" fill="none" stroke-linecap="round" stroke-linejoin="round" stroke-linecap="butt" stroke-linejoin="miter"/>
<path d="M249.5,582.5 L259,591.25 L249.5,600" stroke="#CCCCCC" stroke-width="2" fill="none" stroke-linecap="round" stroke-linejoin="round" stroke-linecap="butt" stroke-linejoin="miter"/>
<path d="M249.5,626.5 L259,635.25 L249.5,644" stroke="#CCCCCC" stroke-width="2" fill="none" stroke-linecap="round" stroke-linejoin="round" stroke-linecap="butt" stroke-linejoin="miter"/>
<path d="M249.5,670.5 L259,679.25 L249.5,688" stroke="#CCCCCC" stroke-width="2" fill="none" stroke-linecap="round" stroke-linejoin="round" stroke-linecap="butt" stroke-linejoin="miter"/>
<path d="M245,718.5 L254.25,728 L263.5,718.5" stroke="#CCCCCC" stroke-width="2" fill="none" stroke-linecap="round" stroke-linejoin="round" stroke-linecap="butt" stroke-linejoin="miter"/>
<g transform="translate(-788,585.3)"><path d="M1048.2,173.3 L1060.3,173.3 L1067.2,179.3 L1067.2,187.8 L1062.6,187.8 Z" fill="#5A93BF"/><path d="M1048.2,173.3 L1044,182 L1048.2,186.2 Z" fill="#5A93BF"/><path d="M1044.6,182.2 L1053,191 L1062.4,191 L1062.6,187.8" stroke="#34536A" stroke-width="1.2" fill="none"/><path d="M1048.5,173.5 L1054.5,169.5 L1058.5,169.5 L1061,173" stroke="#3A5E78" stroke-width="1.1" fill="none"/></g>
<path d="M245,806.5 L254.25,816 L263.5,806.5" stroke="#CCCCCC" stroke-width="2" fill="none" stroke-linecap="round" stroke-linejoin="round" stroke-linecap="butt" stroke-linejoin="miter"/>
<g transform="translate(-788,673.3)"><path d="M1048.2,173.3 L1060.3,173.3 L1067.2,179.3 L1067.2,187.8 L1062.6,187.8 Z" fill="#5A93BF"/><path d="M1048.2,173.3 L1044,182 L1048.2,186.2 Z" fill="#5A93BF"/><path d="M1044.6,182.2 L1053,191 L1062.4,191 L1062.6,187.8" stroke="#34536A" stroke-width="1.2" fill="none"/><path d="M1048.5,173.5 L1054.5,169.5 L1058.5,169.5 L1061,173" stroke="#3A5E78" stroke-width="1.1" fill="none"/></g>
<g transform="translate(-1043.5,716)"><path d="M1295.4,170.2 L1305.6,180.6 L1295.4,191 L1285.2,180.6 Z" fill="#3D4A55" stroke="#3D4A55" stroke-width="2" stroke-linejoin="round"/><path d="M1292.5,172 L1296,175.6 L1295.4,185.5 M1296,175.6 L1300,180.5" stroke="#181818" stroke-width="1.3" fill="none"/><circle cx="1295.4" cy="185.6" r="1.6" fill="#181818"/><circle cx="1300.2" cy="180.7" r="1.6" fill="#181818"/></g>
<path d="M250.7,930.1 H255.1 L252.4,946.1 H249.1 Z" fill="#A074C4" />
<circle cx="250.5" cy="950.7" r="2.9" fill="#A074C4"/>
<path d="M250.7,974.1 H255.1 L252.4,990.1 H249.1 Z" fill="#A074C4" />
<circle cx="250.5" cy="994.7" r="2.9" fill="#A074C4"/>
<circle cx="245.8" cy="1035.2" r="2.3" fill="#E37933"/>
<path d="M244.5,1028.5 A7.5,7.5 0 0 1 252,1036" stroke="#E37933" stroke-width="3" fill="none" stroke-linecap="round" stroke-linejoin="round" stroke-linecap="butt"/>
<path d="M244.5,1023 A13,13 0 0 1 257.5,1036" stroke="#E37933" stroke-width="3" fill="none" stroke-linecap="round" stroke-linejoin="round" stroke-linecap="butt"/>
<path d="M248,1065.8 H263.4" stroke="#D4D4D4" stroke-width="2.2" fill="none" stroke-linecap="round" stroke-linejoin="round" stroke-linecap="round"/>
<path d="M248,1070.9 H256.2" stroke="#D4D4D4" stroke-width="2.2" fill="none" stroke-linecap="round" stroke-linejoin="round" stroke-linecap="round"/>
<path d="M248,1075.8 H263.4" stroke="#D4D4D4" stroke-width="2.2" fill="none" stroke-linecap="round" stroke-linejoin="round" stroke-linecap="round"/>
<path d="M248,1081 H259.2" stroke="#D4D4D4" stroke-width="2.2" fill="none" stroke-linecap="round" stroke-linejoin="round" stroke-linecap="round"/>
<path d="M250.7,1106.1000000000001 H255.1 L252.4,1122.1000000000001 H249.1 Z" fill="#A074C4" />
<circle cx="250.5" cy="1126.7" r="2.9" fill="#A074C4"/>
<circle cx="251.3" cy="1161.2" r="11.3" stroke="#519ABA" stroke-width="2.2" fill="none"/>
<circle cx="251.3" cy="1155.6" r="1.9" fill="#519ABA"/>
<path d="M248.3,1159.5 H252 V1168 M247.5,1168.3 H255.5" stroke="#519ABA" stroke-width="2.4" fill="none" stroke-linecap="round" stroke-linejoin="round" stroke-linecap="butt"/>
<path d="M224,1806.5 L233.5,1815.0 L224,1823.5" stroke="#CCCCCC" stroke-width="2" fill="none" stroke-linecap="round" stroke-linejoin="round" stroke-linecap="butt" stroke-linejoin="miter"/>
<path d="M224,1850.5 L233.5,1859.0 L224,1867.5" stroke="#CCCCCC" stroke-width="2" fill="none" stroke-linecap="round" stroke-linejoin="round" stroke-linecap="butt" stroke-linejoin="miter"/>
<path d="M224,1894.5 L233.5,1903.0 L224,1911.5" stroke="#CCCCCC" stroke-width="2" fill="none" stroke-linecap="round" stroke-linejoin="round" stroke-linecap="butt" stroke-linejoin="miter"/>
<g transform="translate(0,0.8)"><path d="M1048.2,173.3 L1060.3,173.3 L1067.2,179.3 L1067.2,187.8 L1062.6,187.8 Z" fill="#5A93BF"/><path d="M1048.2,173.3 L1044,182 L1048.2,186.2 Z" fill="#5A93BF"/><path d="M1044.6,182.2 L1053,191 L1062.4,191 L1062.6,187.8" stroke="#34536A" stroke-width="1.2" fill="none"/><path d="M1048.5,173.5 L1054.5,169.5 L1058.5,169.5 L1061,173" stroke="#3A5E78" stroke-width="1.1" fill="none"/></g>
<path d="M1218.5,173.5 L1234,189 M1234,173.5 L1218.5,189" stroke="#CCCCCC" stroke-width="2" fill="none" stroke-linecap="round" stroke-linejoin="round" stroke-linecap="butt"/>
<g transform="translate(0,0)"><path d="M1295.4,170.2 L1305.6,180.6 L1295.4,191 L1285.2,180.6 Z" fill="#3D4A55" stroke="#3D4A55" stroke-width="2" stroke-linejoin="round"/><path d="M1292.5,172 L1296,175.6 L1295.4,185.5 M1296,175.6 L1300,180.5" stroke="#181818" stroke-width="1.3" fill="none"/><circle cx="1295.4" cy="185.6" r="1.6" fill="#181818"/><circle cx="1300.2" cy="180.7" r="1.6" fill="#181818"/></g>
<path d="M1534.7,168.9 H1539.1 L1536.4,184.9 H1533.1 Z" fill="#A074C4" />
<circle cx="1534.5" cy="189.5" r="2.9" fill="#A074C4"/>
<path d="M2542.8,170 L2542.8,193.5 L2561,181.8 Z" stroke="#CCCCCC" stroke-width="2.2" fill="none" stroke-linecap="round" stroke-linejoin="round" stroke-linejoin="miter"/>
<path d="M2577,178.5 L2583.8,185.2 L2590.6,178.5" stroke="#CCCCCC" stroke-width="2" fill="none" stroke-linecap="round" stroke-linejoin="round" />
<rect x="2619" y="168" width="24" height="24" rx="3.5" stroke="#CCCCCC" stroke-width="2" fill="none"/>
<path d="M2631,168.5 V191.5" stroke="#CCCCCC" stroke-width="2" fill="none" stroke-linecap="round" stroke-linejoin="round" stroke-linecap="butt"/>
<circle cx="2672" cy="181" r="2.1" fill="#CCCCCC"/>
<circle cx="2682" cy="181" r="2.1" fill="#CCCCCC"/>
<circle cx="2692" cy="181" r="2.1" fill="#CCCCCC"/>
<path d="M1089.5,230 L1098,238.5 L1089.5,247" stroke="#A9A9A9" stroke-width="2" fill="none" stroke-linecap="round" stroke-linejoin="round" stroke-linecap="butt" stroke-linejoin="miter"/>
<g transform="translate(72.5,57.8)"><path d="M1048.2,173.3 L1060.3,173.3 L1067.2,179.3 L1067.2,187.8 L1062.6,187.8 Z" fill="#5A93BF"/><path d="M1048.2,173.3 L1044,182 L1048.2,186.2 Z" fill="#5A93BF"/><path d="M1044.6,182.2 L1053,191 L1062.4,191 L1062.6,187.8" stroke="#34536A" stroke-width="1.2" fill="none"/><path d="M1048.5,173.5 L1054.5,169.5 L1058.5,169.5 L1061,173" stroke="#3A5E78" stroke-width="1.1" fill="none"/></g>
<path d="M1279,230 L1288,238.5 L1279,247" stroke="#A9A9A9" stroke-width="2" fill="none" stroke-linecap="round" stroke-linejoin="round" stroke-linecap="butt" stroke-linejoin="miter"/>
<path d="M1309.4,226 L1312.2,228.8 L1305.4,235.6 L1302.6,232.8 Z" stroke="#EE9D28" stroke-width="2.6" fill="none" stroke-linecap="round" stroke-linejoin="round" stroke-linejoin="round"/>
<path d="M1309.4,234.5 V246.4 H1320 M1309.4,236.8 H1320" stroke="#EE9D28" stroke-width="2.6" fill="none" stroke-linecap="round" stroke-linejoin="round" stroke-linecap="butt"/>
<path d="M1324.6,233.4 L1327,235.6 L1322,240.4 L1319.8,238.1 Z" stroke="#EE9D28" stroke-width="2.6" fill="none" stroke-linecap="round" stroke-linejoin="round" stroke-linejoin="round"/>
<path d="M1324.6,243.3 L1327,245.5 L1322,250.3 L1319.8,248 Z" stroke="#EE9D28" stroke-width="2.6" fill="none" stroke-linecap="round" stroke-linejoin="round" stroke-linejoin="round"/>
<path d="M1160.6,538.2 A9,9 0 1 1 1169.4,538.2 L1169,545.8 Q1168.8,548.0 1166.8,548.0 H1163.2 Q1161.2,548.0 1161,545.8 Z" fill="#F5C518" />
<rect x="2503.5" y="261" width="12" height="2.2" fill="#569CD6" fill-opacity="0.45"/>
<rect x="2517.5" y="261" width="62" height="2.2" fill="#CE9178" fill-opacity="0.45"/>
<rect x="2579.5" y="261" width="2" height="2.2" fill="#CCCCCC" fill-opacity="0.45"/>
<rect x="2503.5" y="269" width="8" height="2.2" fill="#569CD6" fill-opacity="0.45"/>
<rect x="2513.5" y="269" width="8" height="2.2" fill="#DCDCAA" fill-opacity="0.45"/>
<rect x="2521.5" y="269" width="2" height="2.2" fill="#FFD700" fill-opacity="0.45"/>
<rect x="2523.5" y="269" width="2" height="2.2" fill="#FFD700" fill-opacity="0.45"/>
<rect x="2527.5" y="269" width="2" height="2.2" fill="#FFD700" fill-opacity="0.45"/>
<rect x="2507.5" y="273" width="12" height="2.2" fill="#DCDCAA" fill-opacity="0.45"/>
<rect x="2519.5" y="273" width="2" height="2.2" fill="#DA70D6" fill-opacity="0.45"/>
<rect x="2521.5" y="273" width="10" height="2.2" fill="#569CD6" fill-opacity="0.45"/>
<rect x="2533.5" y="273" width="10" height="2.2" fill="#4EC9B0" fill-opacity="0.45"/>
<rect x="2543.5" y="273" width="2" height="2.2" fill="#179FFF" fill-opacity="0.45"/>
<rect x="2545.5" y="273" width="2" height="2.2" fill="#179FFF" fill-opacity="0.45"/>
<rect x="2547.5" y="273" width="2" height="2.2" fill="#DA70D6" fill-opacity="0.45"/>
<rect x="2549.5" y="273" width="2" height="2.2" fill="#CCCCCC" fill-opacity="0.45"/>
<rect x="2503.5" y="277" width="2" height="2.2" fill="#FFD700" fill-opacity="0.45"/>
<rect x="2503.5" y="285" width="10" height="2.2" fill="#569CD6" fill-opacity="0.45"/>
<rect x="2515.5" y="285" width="10" height="2.2" fill="#4EC9B0" fill-opacity="0.45"/>
<rect x="2527.5" y="285" width="14" height="2.2" fill="#569CD6" fill-opacity="0.45"/>
<rect x="2543.5" y="285" width="30" height="2.2" fill="#4EC9B0" fill-opacity="0.45"/>
<rect x="2575.5" y="285" width="2" height="2.2" fill="#FFD700" fill-opacity="0.45"/>
<rect x="2507.5" y="289" width="10" height="2.2" fill="#569CD6" fill-opacity="0.45"/>
<rect x="2519.5" y="289" width="10" height="2.2" fill="#4EC9B0" fill-opacity="0.45"/>
<rect x="2529.5" y="289" width="2" height="2.2" fill="#DA70D6" fill-opacity="0.45"/>
<rect x="2531.5" y="289" width="2" height="2.2" fill="#179FFF" fill-opacity="0.45"/>
<rect x="2533.5" y="289" width="10" height="2.2" fill="#569CD6" fill-opacity="0.45"/>
<rect x="2543.5" y="289" width="2" height="2.2" fill="#CCCCCC" fill-opacity="0.45"/>
<rect x="2545.5" y="289" width="6" height="2.2" fill="#9CDCFE" fill-opacity="0.45"/>
<rect x="2551.5" y="289" width="2" height="2.2" fill="#179FFF" fill-opacity="0.45"/>
<rect x="2553.5" y="289" width="2" height="2.2" fill="#DA70D6" fill-opacity="0.45"/>
<rect x="2555.5" y="289" width="2" height="2.2" fill="#CCCCCC" fill-opacity="0.45"/>
<rect x="2507.5" y="297" width="4" height="2.2" fill="#6A9955" fill-opacity="0.45"/>
<rect x="2513.5" y="297" width="8" height="2.2" fill="#6A9955" fill-opacity="0.45"/>
<rect x="2523.5" y="297" width="12" height="2.2" fill="#6A9955" fill-opacity="0.45"/>
<rect x="2537.5" y="297" width="4" height="2.2" fill="#6A9955" fill-opacity="0.45"/>
<rect x="2543.5" y="297" width="6" height="2.2" fill="#6A9955" fill-opacity="0.45"/>
<rect x="2551.5" y="297" width="8" height="2.2" fill="#6A9955" fill-opacity="0.45"/>
<rect x="2561.5" y="297" width="4" height="2.2" fill="#6A9955" fill-opacity="0.45"/>
<rect x="2567.5" y="297" width="8" height="2.2" fill="#6A9955" fill-opacity="0.45"/>
<rect x="2577.5" y="297" width="24" height="2.2" fill="#6A9955" fill-opacity="0.45"/>
<rect x="2507.5" y="301" width="18" height="2.2" fill="#9CDCFE" fill-opacity="0.45"/>
<rect x="2507.5" y="305" width="12" height="2.2" fill="#4EC9B0" fill-opacity="0.45"/>
<rect x="2521.5" y="305" width="10" height="2.2" fill="#DCDCAA" fill-opacity="0.45"/>
<rect x="2531.5" y="305" width="2" height="2.2" fill="#DA70D6" fill-opacity="0.45"/>
<rect x="2533.5" y="305" width="24" height="2.2" fill="#4EC9B0" fill-opacity="0.45"/>
<rect x="2559.5" y="305" width="14" height="2.2" fill="#9CDCFE" fill-opacity="0.45"/>
<rect x="2573.5" y="305" width="2" height="2.2" fill="#DA70D6" fill-opacity="0.45"/>
<rect x="2577.5" y="305" width="2" height="2.2" fill="#DA70D6" fill-opacity="0.45"/>
<rect x="2511.5" y="309" width="12" height="2.2" fill="#C586C0" fill-opacity="0.45"/>
<rect x="2525.5" y="309" width="22" height="2.2" fill="#4EC9B0" fill-opacity="0.45"/>
<rect x="2547.5" y="309" width="2" height="2.2" fill="#179FFF" fill-opacity="0.45"/>
<rect x="2515.5" y="313" width="10" height="2.2" fill="#9CDCFE" fill-opacity="0.45"/>
<rect x="2525.5" y="313" width="2" height="2.2" fill="#CCCCCC" fill-opacity="0.45"/>
<rect x="2529.5" y="313" width="16" height="2.2" fill="#CE9178" fill-opacity="0.45"/>
<rect x="2547.5" y="313" width="10" height="2.2" fill="#CE9178" fill-opacity="0.45"/>
<rect x="2557.5" y="313" width="2" height="2.2" fill="#CCCCCC" fill-opacity="0.45"/>
<rect x="2515.5" y="317" width="10" height="2.2" fill="#9CDCFE" fill-opacity="0.45"/>
<rect x="2525.5" y="317" width="2" height="2.2" fill="#CCCCCC" fill-opacity="0.45"/>
<rect x="2529.5" y="317" width="18" height="2.2" fill="#4EC9B0" fill-opacity="0.45"/>
<rect x="2547.5" y="317" width="2" height="2.2" fill="#FFD700" fill-opacity="0.45"/>
<rect x="2519.5" y="321" width="4" height="2.2" fill="#6A9955" fill-opacity="0.45"/>
<rect x="2525.5" y="321" width="8" height="2.2" fill="#6A9955" fill-opacity="0.45"/>
<rect x="2535.5" y="321" width="4" height="2.2" fill="#6A9955" fill-opacity="0.45"/>
<rect x="2541.5" y="321" width="6" height="2.2" fill="#6A9955" fill-opacity="0.45"/>
<rect x="2549.5" y="321" width="10" height="2.2" fill="#6A9955" fill-opacity="0.45"/>
<rect x="2561.5" y="321" width="4" height="2.2" fill="#6A9955" fill-opacity="0.45"/>
<rect x="2567.5" y="321" width="8" height="2.2" fill="#6A9955" fill-opacity="0.45"/>
<rect x="2577.5" y="321" width="24" height="2.2" fill="#6A9955" fill-opacity="0.45"/>
<rect x="2519.5" y="325" width="4" height="2.2" fill="#6A9955" fill-opacity="0.45"/>
<rect x="2519.5" y="329" width="4" height="2.2" fill="#6A9955" fill-opacity="0.45"/>
<rect x="2525.5" y="329" width="6" height="2.2" fill="#6A9955" fill-opacity="0.45"/>
<rect x="2533.5" y="329" width="10" height="2.2" fill="#6A9955" fill-opacity="0.45"/>
<rect x="2545.5" y="329" width="6" height="2.2" fill="#6A9955" fill-opacity="0.45"/>
<rect x="2553.5" y="329" width="14" height="2.2" fill="#6A9955" fill-opacity="0.45"/>
<rect x="2569.5" y="329" width="8" height="2.2" fill="#6A9955" fill-opacity="0.45"/>
<rect x="2579.5" y="329" width="22" height="2.2" fill="#6A9955" fill-opacity="0.45"/>
<rect x="2603.5" y="329" width="8" height="2.2" fill="#6A9955" fill-opacity="0.45"/>
<rect x="2613.5" y="329" width="16" height="2.2" fill="#6A9955" fill-opacity="0.45"/>
<rect x="2631.5" y="329" width="10" height="2.2" fill="#6A9955" fill-opacity="0.45"/>
<rect x="2643.5" y="329" width="12" height="2.2" fill="#6A9955" fill-opacity="0.45"/>
<rect x="2657.5" y="329" width="6" height="2.2" fill="#6A9955" fill-opacity="0.45"/>
<rect x="2519.5" y="333" width="4" height="2.2" fill="#6A9955" fill-opacity="0.45"/>
<rect x="2525.5" y="333" width="6" height="2.2" fill="#6A9955" fill-opacity="0.45"/>
<rect x="2533.5" y="333" width="22" height="2.2" fill="#6A9955" fill-opacity="0.45"/>
<rect x="2557.5" y="333" width="6" height="2.2" fill="#6A9955" fill-opacity="0.45"/>
<rect x="2565.5" y="333" width="2" height="2.2" fill="#6A9955" fill-opacity="0.45"/>
<rect x="2569.5" y="333" width="12" height="2.2" fill="#6A9955" fill-opacity="0.45"/>
<rect x="2583.5" y="333" width="16" height="2.2" fill="#6A9955" fill-opacity="0.45"/>
<rect x="2601.5" y="333" width="10" height="2.2" fill="#6A9955" fill-opacity="0.45"/>
<rect x="2613.5" y="333" width="14" height="2.2" fill="#6A9955" fill-opacity="0.45"/>
<rect x="2629.5" y="333" width="16" height="2.2" fill="#6A9955" fill-opacity="0.45"/>
<rect x="2647.5" y="333" width="6" height="2.2" fill="#6A9955" fill-opacity="0.45"/>
<rect x="2655.5" y="333" width="8" height="2.2" fill="#6A9955" fill-opacity="0.45"/>
<rect x="2519.5" y="337" width="4" height="2.2" fill="#6A9955" fill-opacity="0.45"/>
<rect x="2525.5" y="337" width="6" height="2.2" fill="#6A9955" fill-opacity="0.45"/>
<rect x="2533.5" y="337" width="16" height="2.2" fill="#6A9955" fill-opacity="0.45"/>
<rect x="2551.5" y="337" width="6" height="2.2" fill="#6A9955" fill-opacity="0.45"/>
<rect x="2559.5" y="337" width="18" height="2.2" fill="#6A9955" fill-opacity="0.45"/>
<rect x="2579.5" y="337" width="4" height="2.2" fill="#6A9955" fill-opacity="0.45"/>
<rect x="2585.5" y="337" width="6" height="2.2" fill="#6A9955" fill-opacity="0.45"/>
<rect x="2593.5" y="337" width="22" height="2.2" fill="#6A9955" fill-opacity="0.45"/>
<rect x="2617.5" y="337" width="10" height="2.2" fill="#6A9955" fill-opacity="0.45"/>
<rect x="2629.5" y="337" width="4" height="2.2" fill="#6A9955" fill-opacity="0.45"/>
<rect x="2635.5" y="337" width="24" height="2.2" fill="#6A9955" fill-opacity="0.45"/>
<rect x="2519.5" y="341" width="4" height="2.2" fill="#6A9955" fill-opacity="0.45"/>
<rect x="2525.5" y="341" width="6" height="2.2" fill="#6A9955" fill-opacity="0.45"/>
<rect x="2533.5" y="341" width="8" height="2.2" fill="#6A9955" fill-opacity="0.45"/>
<rect x="2543.5" y="341" width="12" height="2.2" fill="#6A9955" fill-opacity="0.45"/>
<rect x="2557.5" y="341" width="8" height="2.2" fill="#6A9955" fill-opacity="0.45"/>
<rect x="2567.5" y="341" width="14" height="2.2" fill="#6A9955" fill-opacity="0.45"/>
<rect x="2583.5" y="341" width="10" height="2.2" fill="#6A9955" fill-opacity="0.45"/>
<rect x="2595.5" y="341" width="8" height="2.2" fill="#6A9955" fill-opacity="0.45"/>
<rect x="2605.5" y="341" width="14" height="2.2" fill="#6A9955" fill-opacity="0.45"/>
<rect x="2621.5" y="341" width="4" height="2.2" fill="#6A9955" fill-opacity="0.45"/>
<rect x="2627.5" y="341" width="10" height="2.2" fill="#6A9955" fill-opacity="0.45"/>
<rect x="2639.5" y="341" width="6" height="2.2" fill="#6A9955" fill-opacity="0.45"/>
<rect x="2647.5" y="341" width="8" height="2.2" fill="#6A9955" fill-opacity="0.45"/>
<rect x="2519.5" y="345" width="4" height="2.2" fill="#6A9955" fill-opacity="0.45"/>
<rect x="2525.5" y="345" width="14" height="2.2" fill="#6A9955" fill-opacity="0.45"/>
<rect x="2541.5" y="345" width="12" height="2.2" fill="#6A9955" fill-opacity="0.45"/>
<rect x="2555.5" y="345" width="4" height="2.2" fill="#6A9955" fill-opacity="0.45"/>
<rect x="2561.5" y="345" width="2" height="2.2" fill="#6A9955" fill-opacity="0.45"/>
<rect x="2565.5" y="345" width="34" height="2.2" fill="#6A9955" fill-opacity="0.45"/>
<rect x="2601.5" y="345" width="8" height="2.2" fill="#6A9955" fill-opacity="0.45"/>
<rect x="2611.5" y="345" width="4" height="2.2" fill="#6A9955" fill-opacity="0.45"/>
<rect x="2617.5" y="345" width="10" height="2.2" fill="#6A9955" fill-opacity="0.45"/>
<rect x="2629.5" y="345" width="6" height="2.2" fill="#6A9955" fill-opacity="0.45"/>
<rect x="2637.5" y="345" width="4" height="2.2" fill="#6A9955" fill-opacity="0.45"/>
<rect x="2643.5" y="345" width="6" height="2.2" fill="#6A9955" fill-opacity="0.45"/>
<rect x="2651.5" y="345" width="8" height="2.2" fill="#6A9955" fill-opacity="0.45"/>
<rect x="2519.5" y="349" width="4" height="2.2" fill="#6A9955" fill-opacity="0.45"/>
<rect x="2525.5" y="349" width="6" height="2.2" fill="#6A9955" fill-opacity="0.45"/>
<rect x="2533.5" y="349" width="14" height="2.2" fill="#6A9955" fill-opacity="0.45"/>
<rect x="2549.5" y="349" width="8" height="2.2" fill="#6A9955" fill-opacity="0.45"/>
<rect x="2559.5" y="349" width="4" height="2.2" fill="#6A9955" fill-opacity="0.45"/>
<rect x="2565.5" y="349" width="10" height="2.2" fill="#6A9955" fill-opacity="0.45"/>
<rect x="2577.5" y="349" width="6" height="2.2" fill="#6A9955" fill-opacity="0.45"/>
<rect x="2585.5" y="349" width="10" height="2.2" fill="#6A9955" fill-opacity="0.45"/>
<rect x="2519.5" y="353" width="4" height="2.2" fill="#6A9955" fill-opacity="0.45"/>
<rect x="2519.5" y="357" width="4" height="2.2" fill="#6A9955" fill-opacity="0.45"/>
<rect x="2525.5" y="357" width="12" height="2.2" fill="#6A9955" fill-opacity="0.45"/>
<rect x="2539.5" y="357" width="8" height="2.2" fill="#6A9955" fill-opacity="0.45"/>
<rect x="2549.5" y="357" width="6" height="2.2" fill="#6A9955" fill-opacity="0.45"/>
<rect x="2557.5" y="357" width="14" height="2.2" fill="#6A9955" fill-opacity="0.45"/>
<rect x="2573.5" y="357" width="12" height="2.2" fill="#6A9955" fill-opacity="0.45"/>
<rect x="2587.5" y="357" width="10" height="2.2" fill="#6A9955" fill-opacity="0.45"/>
<rect x="2599.5" y="357" width="8" height="2.2" fill="#6A9955" fill-opacity="0.45"/>
<rect x="2609.5" y="357" width="4" height="2.2" fill="#6A9955" fill-opacity="0.45"/>
<rect x="2615.5" y="357" width="10" height="2.2" fill="#6A9955" fill-opacity="0.45"/>
<rect x="2627.5" y="357" width="6" height="2.2" fill="#6A9955" fill-opacity="0.45"/>
<rect x="2635.5" y="357" width="22" height="2.2" fill="#6A9955" fill-opacity="0.45"/>
<rect x="2519.5" y="361" width="4" height="2.2" fill="#6A9955" fill-opacity="0.45"/>
<rect x="2525.5" y="361" width="10" height="2.2" fill="#6A9955" fill-opacity="0.45"/>
<rect x="2537.5" y="361" width="4" height="2.2" fill="#6A9955" fill-opacity="0.45"/>
<rect x="2543.5" y="361" width="6" height="2.2" fill="#6A9955" fill-opacity="0.45"/>
<rect x="2551.5" y="361" width="8" height="2.2" fill="#6A9955" fill-opacity="0.45"/>
<rect x="2561.5" y="361" width="12" height="2.2" fill="#6A9955" fill-opacity="0.45"/>
<rect x="2575.5" y="361" width="6" height="2.2" fill="#6A9955" fill-opacity="0.45"/>
<rect x="2583.5" y="361" width="14" height="2.2" fill="#6A9955" fill-opacity="0.45"/>
<rect x="2599.5" y="361" width="4" height="2.2" fill="#6A9955" fill-opacity="0.45"/>
<rect x="2605.5" y="361" width="10" height="2.2" fill="#6A9955" fill-opacity="0.45"/>
<rect x="2617.5" y="361" width="6" height="2.2" fill="#6A9955" fill-opacity="0.45"/>
<rect x="2625.5" y="361" width="12" height="2.2" fill="#6A9955" fill-opacity="0.45"/>
<rect x="2639.5" y="361" width="6" height="2.2" fill="#6A9955" fill-opacity="0.45"/>
<rect x="2647.5" y="361" width="6" height="2.2" fill="#6A9955" fill-opacity="0.45"/>
<rect x="2519.5" y="365" width="4" height="2.2" fill="#6A9955" fill-opacity="0.45"/>
<rect x="2525.5" y="365" width="14" height="2.2" fill="#6A9955" fill-opacity="0.45"/>
<rect x="2541.5" y="365" width="16" height="2.2" fill="#6A9955" fill-opacity="0.45"/>
<rect x="2519.5" y="369" width="4" height="2.2" fill="#6A9955" fill-opacity="0.45"/>
<rect x="2519.5" y="373" width="4" height="2.2" fill="#6A9955" fill-opacity="0.45"/>
<rect x="2525.5" y="373" width="8" height="2.2" fill="#6A9955" fill-opacity="0.45"/>
<rect x="2535.5" y="373" width="10" height="2.2" fill="#6A9955" fill-opacity="0.45"/>
<rect x="2547.5" y="373" width="6" height="2.2" fill="#6A9955" fill-opacity="0.45"/>
<rect x="2555.5" y="373" width="8" height="2.2" fill="#6A9955" fill-opacity="0.45"/>
<rect x="2565.5" y="373" width="8" height="2.2" fill="#6A9955" fill-opacity="0.45"/>
<rect x="2575.5" y="373" width="6" height="2.2" fill="#6A9955" fill-opacity="0.45"/>
<rect x="2583.5" y="373" width="8" height="2.2" fill="#6A9955" fill-opacity="0.45"/>
<rect x="2593.5" y="373" width="14" height="2.2" fill="#6A9955" fill-opacity="0.45"/>
<rect x="2609.5" y="373" width="8" height="2.2" fill="#6A9955" fill-opacity="0.45"/>
<rect x="2619.5" y="373" width="8" height="2.2" fill="#6A9955" fill-opacity="0.45"/>
<rect x="2629.5" y="373" width="14" height="2.2" fill="#6A9955" fill-opacity="0.45"/>
<rect x="2645.5" y="373" width="6" height="2.2" fill="#6A9955" fill-opacity="0.45"/>
<rect x="2653.5" y="373" width="4" height="2.2" fill="#6A9955" fill-opacity="0.45"/>
<rect x="2519.5" y="377" width="4" height="2.2" fill="#6A9955" fill-opacity="0.45"/>
<rect x="2525.5" y="377" width="12" height="2.2" fill="#6A9955" fill-opacity="0.45"/>
<rect x="2539.5" y="377" width="8" height="2.2" fill="#6A9955" fill-opacity="0.45"/>
<rect x="2549.5" y="377" width="8" height="2.2" fill="#6A9955" fill-opacity="0.45"/>
<rect x="2559.5" y="377" width="2" height="2.2" fill="#6A9955" fill-opacity="0.45"/>
<rect x="2563.5" y="377" width="6" height="2.2" fill="#6A9955" fill-opacity="0.45"/>
<rect x="2571.5" y="377" width="14" height="2.2" fill="#6A9955" fill-opacity="0.45"/>
<rect x="2519.5" y="381" width="22" height="2.2" fill="#9CDCFE" fill-opacity="0.45"/>
<rect x="2541.5" y="381" width="2" height="2.2" fill="#CCCCCC" fill-opacity="0.45"/>
<rect x="2545.5" y="381" width="22" height="2.2" fill="#4EC9B0" fill-opacity="0.45"/>
<rect x="2567.5" y="381" width="2" height="2.2" fill="#CCCCCC" fill-opacity="0.45"/>
<rect x="2569.5" y="381" width="16" height="2.2" fill="#DCDCAA" fill-opacity="0.45"/>
<rect x="2585.5" y="381" width="2" height="2.2" fill="#DA70D6" fill-opacity="0.45"/>
<rect x="2587.5" y="381" width="18" height="2.2" fill="#9CDCFE" fill-opacity="0.45"/>
<rect x="2605.5" y="381" width="2" height="2.2" fill="#CCCCCC" fill-opacity="0.45"/>
<rect x="2609.5" y="381" width="12" height="2.2" fill="#4EC9B0" fill-opacity="0.45"/>
<rect x="2621.5" y="381" width="2" height="2.2" fill="#CCCCCC" fill-opacity="0.45"/>
<rect x="2623.5" y="381" width="6" height="2.2" fill="#9CDCFE" fill-opacity="0.45"/>
<rect x="2629.5" y="381" width="2" height="2.2" fill="#CCCCCC" fill-opacity="0.45"/>
<rect x="2631.5" y="381" width="16" height="2.2" fill="#9CDCFE" fill-opacity="0.45"/>
<rect x="2647.5" y="381" width="2" height="2.2" fill="#DA70D6" fill-opacity="0.45"/>
<rect x="2649.5" y="381" width="2" height="2.2" fill="#CCCCCC" fill-opacity="0.45"/>
<rect x="2515.5" y="385" width="2" height="2.2" fill="#FFD700" fill-opacity="0.45"/>
<rect x="2517.5" y="385" width="2" height="2.2" fill="#CCCCCC" fill-opacity="0.45"/>
<rect x="2515.5" y="389" width="8" height="2.2" fill="#9CDCFE" fill-opacity="0.45"/>
<rect x="2523.5" y="389" width="2" height="2.2" fill="#CCCCCC" fill-opacity="0.45"/>
<rect x="2527.5" y="389" width="10" height="2.2" fill="#569CD6" fill-opacity="0.45"/>
<rect x="2539.5" y="389" width="20" height="2.2" fill="#4EC9B0" fill-opacity="0.45"/>
<rect x="2559.5" y="389" width="2" height="2.2" fill="#FFD700" fill-opacity="0.45"/>
<rect x="2561.5" y="389" width="10" height="2.2" fill="#9CDCFE" fill-opacity="0.45"/>
<rect x="2571.5" y="389" width="2" height="2.2" fill="#CCCCCC" fill-opacity="0.45"/>
<rect x="2575.5" y="389" width="16" height="2.2" fill="#CE9178" fill-opacity="0.45"/>
<rect x="2593.5" y="389" width="8" height="2.2" fill="#CE9178" fill-opacity="0.45"/>
<rect x="2603.5" y="389" width="8" height="2.2" fill="#CE9178" fill-opacity="0.45"/>
<rect x="2613.5" y="389" width="10" height="2.2" fill="#CE9178" fill-opacity="0.45"/>
<rect x="2623.5" y="389" width="2" height="2.2" fill="#FFD700" fill-opacity="0.45"/>
<rect x="2625.5" y="389" width="2" height="2.2" fill="#CCCCCC" fill-opacity="0.45"/>
<rect x="2511.5" y="393" width="2" height="2.2" fill="#179FFF" fill-opacity="0.45"/>
<rect x="2513.5" y="393" width="2" height="2.2" fill="#CCCCCC" fill-opacity="0.45"/>
<rect x="2507.5" y="397" width="2" height="2.2" fill="#DA70D6" fill-opacity="0.45"/>
<rect x="2503.5" y="401" width="2" height="2.2" fill="#FFD700" fill-opacity="0.45"/>
<rect x="2503.5" y="409" width="10" height="2.2" fill="#569CD6" fill-opacity="0.45"/>
<rect x="2515.5" y="409" width="20" height="2.2" fill="#4EC9B0" fill-opacity="0.45"/>
<rect x="2537.5" y="409" width="14" height="2.2" fill="#569CD6" fill-opacity="0.45"/>
<rect x="2553.5" y="409" width="28" height="2.2" fill="#4EC9B0" fill-opacity="0.45"/>
<rect x="2583.5" y="409" width="2" height="2.2" fill="#FFD700" fill-opacity="0.45"/>
<rect x="2507.5" y="413" width="10" height="2.2" fill="#569CD6" fill-opacity="0.45"/>
<rect x="2519.5" y="413" width="20" height="2.2" fill="#4EC9B0" fill-opacity="0.45"/>
<rect x="2539.5" y="413" width="2" height="2.2" fill="#DA70D6" fill-opacity="0.45"/>
<rect x="2541.5" y="413" width="2" height="2.2" fill="#179FFF" fill-opacity="0.45"/>
<rect x="2543.5" y="413" width="10" height="2.2" fill="#569CD6" fill-opacity="0.45"/>
<rect x="2553.5" y="413" width="2" height="2.2" fill="#CCCCCC" fill-opacity="0.45"/>
<rect x="2555.5" y="413" width="6" height="2.2" fill="#9CDCFE" fill-opacity="0.45"/>
<rect x="2561.5" y="413" width="2" height="2.2" fill="#CCCCCC" fill-opacity="0.45"/>
<rect x="2565.5" y="413" width="16" height="2.2" fill="#569CD6" fill-opacity="0.45"/>
<rect x="2583.5" y="413" width="8" height="2.2" fill="#569CD6" fill-opacity="0.45"/>
<rect x="2591.5" y="413" width="2" height="2.2" fill="#CCCCCC" fill-opacity="0.45"/>
<rect x="2593.5" y="413" width="10" height="2.2" fill="#9CDCFE" fill-opacity="0.45"/>
<rect x="2603.5" y="413" width="2" height="2.2" fill="#179FFF" fill-opacity="0.45"/>
<rect x="2605.5" y="413" width="2" height="2.2" fill="#DA70D6" fill-opacity="0.45"/>
<rect x="2607.5" y="413" width="2" height="2.2" fill="#CCCCCC" fill-opacity="0.45"/>
<rect x="2507.5" y="421" width="4" height="2.2" fill="#6A9955" fill-opacity="0.45"/>
<rect x="2513.5" y="421" width="8" height="2.2" fill="#6A9955" fill-opacity="0.45"/>
<rect x="2523.5" y="421" width="12" height="2.2" fill="#6A9955" fill-opacity="0.45"/>
<rect x="2537.5" y="421" width="4" height="2.2" fill="#6A9955" fill-opacity="0.45"/>
<rect x="2543.5" y="421" width="6" height="2.2" fill="#6A9955" fill-opacity="0.45"/>
<rect x="2551.5" y="421" width="8" height="2.2" fill="#6A9955" fill-opacity="0.45"/>
<rect x="2561.5" y="421" width="8" height="2.2" fill="#6A9955" fill-opacity="0.45"/>
<rect x="2571.5" y="421" width="4" height="2.2" fill="#6A9955" fill-opacity="0.45"/>
<rect x="2577.5" y="421" width="8" height="2.2" fill="#6A9955" fill-opacity="0.45"/>
<rect x="2587.5" y="421" width="24" height="2.2" fill="#6A9955" fill-opacity="0.45"/>
<rect x="2613.5" y="421" width="4" height="2.2" fill="#6A9955" fill-opacity="0.45"/>
<rect x="2619.5" y="421" width="4" height="2.2" fill="#6A9955" fill-opacity="0.45"/>
<rect x="2625.5" y="421" width="18" height="2.2" fill="#6A9955" fill-opacity="0.45"/>
<rect x="2645.5" y="421" width="14" height="2.2" fill="#6A9955" fill-opacity="0.45"/>
<rect x="2507.5" y="425" width="4" height="2.2" fill="#6A9955" fill-opacity="0.45"/>
<rect x="2513.5" y="425" width="8" height="2.2" fill="#6A9955" fill-opacity="0.45"/>
<rect x="2523.5" y="425" width="4" height="2.2" fill="#6A9955" fill-opacity="0.45"/>
<rect x="2529.5" y="425" width="6" height="2.2" fill="#6A9955" fill-opacity="0.45"/>
<rect x="2537.5" y="425" width="2" height="2.2" fill="#6A9955" fill-opacity="0.45"/>
<rect x="2541.5" y="425" width="10" height="2.2" fill="#6A9955" fill-opacity="0.45"/>
<rect x="2553.5" y="425" width="12" height="2.2" fill="#6A9955" fill-opacity="0.45"/>
<rect x="2567.5" y="425" width="16" height="2.2" fill="#6A9955" fill-opacity="0.45"/>
<rect x="2585.5" y="425" width="12" height="2.2" fill="#6A9955" fill-opacity="0.45"/>
<rect x="2599.5" y="425" width="8" height="2.2" fill="#6A9955" fill-opacity="0.45"/>
<rect x="2609.5" y="425" width="16" height="2.2" fill="#6A9955" fill-opacity="0.45"/>
<rect x="2627.5" y="425" width="12" height="2.2" fill="#6A9955" fill-opacity="0.45"/>
<rect x="2641.5" y="425" width="8" height="2.2" fill="#6A9955" fill-opacity="0.45"/>
<rect x="2651.5" y="425" width="12" height="2.2" fill="#6A9955" fill-opacity="0.45"/>
<rect x="2507.5" y="429" width="4" height="2.2" fill="#6A9955" fill-opacity="0.45"/>
<rect x="2513.5" y="429" width="6" height="2.2" fill="#6A9955" fill-opacity="0.45"/>
<rect x="2521.5" y="429" width="4" height="2.2" fill="#6A9955" fill-opacity="0.45"/>
<rect x="2527.5" y="429" width="12" height="2.2" fill="#6A9955" fill-opacity="0.45"/>
<rect x="2507.5" y="437" width="4" height="2.2" fill="#6A9955" fill-opacity="0.45"/>
<rect x="2513.5" y="437" width="8" height="2.2" fill="#6A9955" fill-opacity="0.45"/>
<rect x="2523.5" y="437" width="10" height="2.2" fill="#6A9955" fill-opacity="0.45"/>
<rect x="2535.5" y="437" width="4" height="2.2" fill="#6A9955" fill-opacity="0.45"/>
<rect x="2541.5" y="437" width="6" height="2.2" fill="#6A9955" fill-opacity="0.45"/>
<rect x="2549.5" y="437" width="26" height="2.2" fill="#6A9955" fill-opacity="0.45"/>
<rect x="2577.5" y="437" width="6" height="2.2" fill="#6A9955" fill-opacity="0.45"/>
<rect x="2585.5" y="437" width="6" height="2.2" fill="#6A9955" fill-opacity="0.45"/>
<rect x="2593.5" y="437" width="12" height="2.2" fill="#6A9955" fill-opacity="0.45"/>
<rect x="2607.5" y="437" width="4" height="2.2" fill="#6A9955" fill-opacity="0.45"/>
<rect x="2613.5" y="437" width="10" height="2.2" fill="#6A9955" fill-opacity="0.45"/>
<rect x="2625.5" y="437" width="6" height="2.2" fill="#6A9955" fill-opacity="0.45"/>
<rect x="2633.5" y="437" width="12" height="2.2" fill="#6A9955" fill-opacity="0.45"/>
<rect x="2647.5" y="437" width="6" height="2.2" fill="#6A9955" fill-opacity="0.45"/>
<rect x="2655.5" y="437" width="8" height="2.2" fill="#6A9955" fill-opacity="0.45"/>
<rect x="2507.5" y="441" width="4" height="2.2" fill="#6A9955" fill-opacity="0.45"/>
<rect x="2513.5" y="441" width="8" height="2.2" fill="#6A9955" fill-opacity="0.45"/>
<rect x="2523.5" y="441" width="6" height="2.2" fill="#6A9955" fill-opacity="0.45"/>
<rect x="2531.5" y="441" width="12" height="2.2" fill="#6A9955" fill-opacity="0.45"/>
<rect x="2545.5" y="441" width="16" height="2.2" fill="#6A9955" fill-opacity="0.45"/>
<rect x="2563.5" y="441" width="4" height="2.2" fill="#6A9955" fill-opacity="0.45"/>
<rect x="2569.5" y="441" width="6" height="2.2" fill="#6A9955" fill-opacity="0.45"/>
<rect x="2577.5" y="441" width="12" height="2.2" fill="#6A9955" fill-opacity="0.45"/>
<rect x="2591.5" y="441" width="6" height="2.2" fill="#6A9955" fill-opacity="0.45"/>
<rect x="2599.5" y="441" width="8" height="2.2" fill="#6A9955" fill-opacity="0.45"/>
<rect x="2609.5" y="441" width="8" height="2.2" fill="#6A9955" fill-opacity="0.45"/>
<rect x="2619.5" y="441" width="6" height="2.2" fill="#6A9955" fill-opacity="0.45"/>
<rect x="2627.5" y="441" width="6" height="2.2" fill="#6A9955" fill-opacity="0.45"/>
<rect x="2635.5" y="441" width="14" height="2.2" fill="#6A9955" fill-opacity="0.45"/>
<rect x="2651.5" y="441" width="6" height="2.2" fill="#6A9955" fill-opacity="0.45"/>
<rect x="2507.5" y="445" width="4" height="2.2" fill="#6A9955" fill-opacity="0.45"/>
<rect x="2513.5" y="445" width="8" height="2.2" fill="#6A9955" fill-opacity="0.45"/>
<rect x="2523.5" y="445" width="4" height="2.2" fill="#6A9955" fill-opacity="0.45"/>
<rect x="2529.5" y="445" width="6" height="2.2" fill="#6A9955" fill-opacity="0.45"/>
<rect x="2537.5" y="445" width="10" height="2.2" fill="#6A9955" fill-opacity="0.45"/>
<rect x="2549.5" y="445" width="12" height="2.2" fill="#6A9955" fill-opacity="0.45"/>
<rect x="2563.5" y="445" width="4" height="2.2" fill="#6A9955" fill-opacity="0.45"/>
<rect x="2569.5" y="445" width="6" height="2.2" fill="#6A9955" fill-opacity="0.45"/>
<rect x="2577.5" y="445" width="12" height="2.2" fill="#6A9955" fill-opacity="0.45"/>
<rect x="2591.5" y="445" width="12" height="2.2" fill="#6A9955" fill-opacity="0.45"/>
<rect x="2605.5" y="445" width="4" height="2.2" fill="#6A9955" fill-opacity="0.45"/>
<rect x="2611.5" y="445" width="2" height="2.2" fill="#6A9955" fill-opacity="0.45"/>
<rect x="2615.5" y="445" width="12" height="2.2" fill="#6A9955" fill-opacity="0.45"/>
<rect x="2629.5" y="445" width="16" height="2.2" fill="#6A9955" fill-opacity="0.45"/>
<rect x="2647.5" y="445" width="6" height="2.2" fill="#6A9955" fill-opacity="0.45"/>
<rect x="2507.5" y="449" width="4" height="2.2" fill="#6A9955" fill-opacity="0.45"/>
<rect x="2513.5" y="449" width="12" height="2.2" fill="#6A9955" fill-opacity="0.45"/>
<rect x="2527.5" y="449" width="12" height="2.2" fill="#6A9955" fill-opacity="0.45"/>
<rect x="2541.5" y="449" width="16" height="2.2" fill="#6A9955" fill-opacity="0.45"/>
<rect x="2507.5" y="457" width="10" height="2.2" fill="#569CD6" fill-opacity="0.45"/>
<rect x="2519.5" y="457" width="12" height="2.2" fill="#4EC9B0" fill-opacity="0.45"/>
<rect x="2533.5" y="457" width="10" height="2.2" fill="#9CDCFE" fill-opacity="0.45"/>
<rect x="2543.5" y="457" width="2" height="2.2" fill="#CCCCCC" fill-opacity="0.45"/>
<rect x="2507.5" y="465" width="18" height="2.2" fill="#9CDCFE" fill-opacity="0.45"/>
<rect x="2507.5" y="469" width="10" height="2.2" fill="#4EC9B0" fill-opacity="0.45"/>
<rect x="2517.5" y="469" width="2" height="2.2" fill="#CCCCCC" fill-opacity="0.45"/>
<rect x="2519.5" y="469" width="20" height="2.2" fill="#4EC9B0" fill-opacity="0.45"/>
<rect x="2539.5" y="469" width="2" height="2.2" fill="#CCCCCC" fill-opacity="0.45"/>
<rect x="2543.5" y="469" width="22" height="2.2" fill="#DCDCAA" fill-opacity="0.45"/>
<rect x="2565.5" y="469" width="2" height="2.2" fill="#DA70D6" fill-opacity="0.45"/>
<rect x="2567.5" y="469" width="2" height="2.2" fill="#DA70D6" fill-opacity="0.45"/>
<rect x="2571.5" y="469" width="2" height="2.2" fill="#CCCCCC" fill-opacity="0.45"/>
<rect x="2573.5" y="469" width="2" height="2.2" fill="#CCCCCC" fill-opacity="0.45"/>
<rect x="2577.5" y="469" width="32" height="2.2" fill="#4EC9B0" fill-opacity="0.45"/>
<rect x="2609.5" y="469" width="2" height="2.2" fill="#DA70D6" fill-opacity="0.45"/>
<rect x="2611.5" y="469" width="2" height="2.2" fill="#DA70D6" fill-opacity="0.45"/>
<rect x="2613.5" y="469" width="2" height="2.2" fill="#CCCCCC" fill-opacity="0.45"/>
<rect x="2503.5" y="473" width="2" height="2.2" fill="#FFD700" fill-opacity="0.45"/>
<rect x="2503.5" y="481" width="10" height="2.2" fill="#569CD6" fill-opacity="0.45"/>
<rect x="2515.5" y="481" width="32" height="2.2" fill="#4EC9B0" fill-opacity="0.45"/>
<rect x="2549.5" y="481" width="14" height="2.2" fill="#569CD6" fill-opacity="0.45"/>
<rect x="2565.5" y="481" width="10" height="2.2" fill="#4EC9B0" fill-opacity="0.45"/>
<rect x="2575.5" y="481" width="2" height="2.2" fill="#CCCCCC" fill-opacity="0.45"/>
<rect x="2577.5" y="481" width="20" height="2.2" fill="#4EC9B0" fill-opacity="0.45"/>
<rect x="2597.5" y="481" width="2" height="2.2" fill="#CCCCCC" fill-opacity="0.45"/>
<rect x="2601.5" y="481" width="2" height="2.2" fill="#FFD700" fill-opacity="0.45"/>
<rect x="2507.5" y="485" width="6" height="2.2" fill="#4EC9B0" fill-opacity="0.45"/>
<rect x="2515.5" y="485" width="16" height="2.2" fill="#9CDCFE" fill-opacity="0.45"/>
<rect x="2533.5" y="485" width="2" height="2.2" fill="#CCCCCC" fill-opacity="0.45"/>
<rect x="2537.5" y="485" width="2" height="2.2" fill="#B5CEA8" fill-opacity="0.45"/>
<rect x="2539.5" y="485" width="2" height="2.2" fill="#CCCCCC" fill-opacity="0.45"/>
<rect x="2507.5" y="493" width="8" height="2.2" fill="#569CD6" fill-opacity="0.45"/>
<rect x="2517.5" y="493" width="34" height="2.2" fill="#DCDCAA" fill-opacity="0.45"/>
<rect x="2551.5" y="493" width="2" height="2.2" fill="#DA70D6" fill-opacity="0.45"/>
<rect x="2553.5" y="493" width="2" height="2.2" fill="#DA70D6" fill-opacity="0.45"/>
<rect x="2557.5" y="493" width="2" height="2.2" fill="#DA70D6" fill-opacity="0.45"/>
<rect x="2511.5" y="497" width="16" height="2.2" fill="#DCDCAA" fill-opacity="0.45"/>
<rect x="2527.5" y="497" width="2" height="2.2" fill="#179FFF" fill-opacity="0.45"/>
<rect x="2529.5" y="497" width="2" height="2.2" fill="#FFD700" fill-opacity="0.45"/>
<rect x="2531.5" y="497" width="2" height="2.2" fill="#FFD700" fill-opacity="0.45"/>
<rect x="2535.5" y="497" width="2" height="2.2" fill="#FFD700" fill-opacity="0.45"/>
<rect x="2515.5" y="501" width="4" height="2.2" fill="#6A9955" fill-opacity="0.45"/>
<rect x="2521.5" y="501" width="8" height="2.2" fill="#6A9955" fill-opacity="0.45"/>
<rect x="2531.5" y="501" width="8" height="2.2" fill="#6A9955" fill-opacity="0.45"/>
<rect x="2541.5" y="501" width="4" height="2.2" fill="#6A9955" fill-opacity="0.45"/>
<rect x="2547.5" y="501" width="16" height="2.2" fill="#6A9955" fill-opacity="0.45"/>
<rect x="2565.5" y="501" width="10" height="2.2" fill="#6A9955" fill-opacity="0.45"/>
<rect x="2577.5" y="501" width="6" height="2.2" fill="#6A9955" fill-opacity="0.45"/>
<rect x="2585.5" y="501" width="14" height="2.2" fill="#6A9955" fill-opacity="0.45"/>
<rect x="2601.5" y="501" width="18" height="2.2" fill="#6A9955" fill-opacity="0.45"/>
<rect x="2621.5" y="501" width="8" height="2.2" fill="#6A9955" fill-opacity="0.45"/>
<rect x="2631.5" y="501" width="18" height="2.2" fill="#6A9955" fill-opacity="0.45"/>
<rect x="2651.5" y="501" width="6" height="2.2" fill="#6A9955" fill-opacity="0.45"/>
<rect x="2515.5" y="505" width="4" height="2.2" fill="#6A9955" fill-opacity="0.45"/>
<rect x="2521.5" y="505" width="14" height="2.2" fill="#6A9955" fill-opacity="0.45"/>
<rect x="2537.5" y="505" width="4" height="2.2" fill="#6A9955" fill-opacity="0.45"/>
<rect x="2543.5" y="505" width="8" height="2.2" fill="#6A9955" fill-opacity="0.45"/>
<rect x="2553.5" y="505" width="12" height="2.2" fill="#6A9955" fill-opacity="0.45"/>
<rect x="2567.5" y="505" width="10" height="2.2" fill="#6A9955" fill-opacity="0.45"/>
<rect x="2579.5" y="505" width="12" height="2.2" fill="#6A9955" fill-opacity="0.45"/>
<rect x="2593.5" y="505" width="4" height="2.2" fill="#6A9955" fill-opacity="0.45"/>
<rect x="2599.5" y="505" width="4" height="2.2" fill="#6A9955" fill-opacity="0.45"/>
<rect x="2605.5" y="505" width="10" height="2.2" fill="#6A9955" fill-opacity="0.45"/>
<rect x="2617.5" y="505" width="6" height="2.2" fill="#6A9955" fill-opacity="0.45"/>
<rect x="2625.5" y="505" width="10" height="2.2" fill="#6A9955" fill-opacity="0.45"/>
<rect x="2637.5" y="505" width="12" height="2.2" fill="#6A9955" fill-opacity="0.45"/>
<rect x="2651.5" y="505" width="10" height="2.2" fill="#6A9955" fill-opacity="0.45"/>
<rect x="2515.5" y="509" width="4" height="2.2" fill="#6A9955" fill-opacity="0.45"/>
<rect x="2521.5" y="509" width="4" height="2.2" fill="#6A9955" fill-opacity="0.45"/>
<rect x="2527.5" y="509" width="8" height="2.2" fill="#6A9955" fill-opacity="0.45"/>
<rect x="2537.5" y="509" width="6" height="2.2" fill="#6A9955" fill-opacity="0.45"/>
<rect x="2545.5" y="509" width="14" height="2.2" fill="#6A9955" fill-opacity="0.45"/>
<rect x="2561.5" y="509" width="6" height="2.2" fill="#6A9955" fill-opacity="0.45"/>
<rect x="2569.5" y="509" width="14" height="2.2" fill="#6A9955" fill-opacity="0.45"/>
<rect x="2585.5" y="509" width="6" height="2.2" fill="#6A9955" fill-opacity="0.45"/>
<rect x="2593.5" y="509" width="14" height="2.2" fill="#6A9955" fill-opacity="0.45"/>
<rect x="2609.5" y="509" width="14" height="2.2" fill="#6A9955" fill-opacity="0.45"/>
<rect x="2625.5" y="509" width="4" height="2.2" fill="#6A9955" fill-opacity="0.45"/>
<rect x="2631.5" y="509" width="4" height="2.2" fill="#6A9955" fill-opacity="0.45"/>
<rect x="2637.5" y="509" width="14" height="2.2" fill="#6A9955" fill-opacity="0.45"/>
<rect x="2515.5" y="513" width="4" height="2.2" fill="#6A9955" fill-opacity="0.45"/>
<rect x="2521.5" y="513" width="16" height="2.2" fill="#6A9955" fill-opacity="0.45"/>
<rect x="2539.5" y="513" width="14" height="2.2" fill="#6A9955" fill-opacity="0.45"/>
<rect x="2555.5" y="513" width="14" height="2.2" fill="#6A9955" fill-opacity="0.45"/>
<rect x="2571.5" y="513" width="22" height="2.2" fill="#6A9955" fill-opacity="0.45"/>
<rect x="2595.5" y="513" width="8" height="2.2" fill="#6A9955" fill-opacity="0.45"/>
<rect x="2605.5" y="513" width="6" height="2.2" fill="#6A9955" fill-opacity="0.45"/>
<rect x="2613.5" y="513" width="10" height="2.2" fill="#6A9955" fill-opacity="0.45"/>
<rect x="2625.5" y="513" width="12" height="2.2" fill="#6A9955" fill-opacity="0.45"/>
<rect x="2639.5" y="513" width="10" height="2.2" fill="#6A9955" fill-opacity="0.45"/>
<rect x="2651.5" y="513" width="6" height="2.2" fill="#6A9955" fill-opacity="0.45"/>
<rect x="2659.5" y="513" width="4" height="2.2" fill="#6A9955" fill-opacity="0.45"/>
<rect x="2515.5" y="517" width="4" height="2.2" fill="#6A9955" fill-opacity="0.45"/>
<rect x="2521.5" y="517" width="12" height="2.2" fill="#6A9955" fill-opacity="0.45"/>
<rect x="2535.5" y="517" width="12" height="2.2" fill="#6A9955" fill-opacity="0.45"/>
<rect x="2549.5" y="517" width="6" height="2.2" fill="#6A9955" fill-opacity="0.45"/>
<rect x="2557.5" y="517" width="4" height="2.2" fill="#6A9955" fill-opacity="0.45"/>
<rect x="2563.5" y="517" width="14" height="2.2" fill="#6A9955" fill-opacity="0.45"/>
<rect x="2579.5" y="517" width="10" height="2.2" fill="#6A9955" fill-opacity="0.45"/>
<rect x="2591.5" y="517" width="12" height="2.2" fill="#6A9955" fill-opacity="0.45"/>
<rect x="2605.5" y="517" width="4" height="2.2" fill="#6A9955" fill-opacity="0.45"/>
<rect x="2611.5" y="517" width="14" height="2.2" fill="#6A9955" fill-opacity="0.45"/>
<rect x="2515.5" y="521" width="16" height="2.2" fill="#9CDCFE" fill-opacity="0.45"/>
<rect x="2531.5" y="521" width="2" height="2.2" fill="#CCCCCC" fill-opacity="0.45"/>
<rect x="2533.5" y="521" width="2" height="2.2" fill="#CCCCCC" fill-opacity="0.45"/>
<rect x="2535.5" y="521" width="2" height="2.2" fill="#CCCCCC" fill-opacity="0.45"/>
<rect x="2511.5" y="525" width="2" height="2.2" fill="#FFD700" fill-opacity="0.45"/>
<rect x="2513.5" y="525" width="2" height="2.2" fill="#179FFF" fill-opacity="0.45"/>
<rect x="2515.5" y="525" width="2" height="2.2" fill="#CCCCCC" fill-opacity="0.45"/>
<rect x="2507.5" y="529" width="2" height="2.2" fill="#DA70D6" fill-opacity="0.45"/>
<rect x="2507.5" y="537" width="18" height="2.2" fill="#9CDCFE" fill-opacity="0.45"/>
<rect x="2507.5" y="541" width="12" height="2.2" fill="#4EC9B0" fill-opacity="0.45"/>
<rect x="2521.5" y="541" width="10" height="2.2" fill="#DCDCAA" fill-opacity="0.45"/>
<rect x="2531.5" y="541" width="2" height="2.2" fill="#DA70D6" fill-opacity="0.45"/>
<rect x="2533.5" y="541" width="24" height="2.2" fill="#4EC9B0" fill-opacity="0.45"/>
<rect x="2559.5" y="541" width="14" height="2.2" fill="#9CDCFE" fill-opacity="0.45"/>
<rect x="2573.5" y="541" width="2" height="2.2" fill="#DA70D6" fill-opacity="0.45"/>
<rect x="2577.5" y="541" width="2" height="2.2" fill="#DA70D6" fill-opacity="0.45"/>
<rect x="2511.5" y="545" width="4" height="2.2" fill="#6A9955" fill-opacity="0.45"/>
<rect x="2517.5" y="545" width="8" height="2.2" fill="#6A9955" fill-opacity="0.45"/>
<rect x="2527.5" y="545" width="12" height="2.2" fill="#6A9955" fill-opacity="0.45"/>
<rect x="2541.5" y="545" width="4" height="2.2" fill="#6A9955" fill-opacity="0.45"/>
<rect x="2547.5" y="545" width="10" height="2.2" fill="#6A9955" fill-opacity="0.45"/>
<rect x="2559.5" y="545" width="10" height="2.2" fill="#6A9955" fill-opacity="0.45"/>
<rect x="2571.5" y="545" width="8" height="2.2" fill="#6A9955" fill-opacity="0.45"/>
<rect x="2581.5" y="545" width="16" height="2.2" fill="#6A9955" fill-opacity="0.45"/>
<rect x="2599.5" y="545" width="4" height="2.2" fill="#6A9955" fill-opacity="0.45"/>
<rect x="2605.5" y="545" width="14" height="2.2" fill="#6A9955" fill-opacity="0.45"/>
<rect x="2621.5" y="545" width="6" height="2.2" fill="#6A9955" fill-opacity="0.45"/>
<rect x="2629.5" y="545" width="16" height="2.2" fill="#6A9955" fill-opacity="0.45"/>
<rect x="2647.5" y="545" width="4" height="2.2" fill="#6A9955" fill-opacity="0.45"/>
<rect x="2653.5" y="545" width="8" height="2.2" fill="#6A9955" fill-opacity="0.45"/>
<rect x="2511.5" y="549" width="4" height="2.2" fill="#6A9955" fill-opacity="0.45"/>
<rect x="2517.5" y="549" width="4" height="2.2" fill="#6A9955" fill-opacity="0.45"/>
<rect x="2523.5" y="549" width="6" height="2.2" fill="#6A9955" fill-opacity="0.45"/>
<rect x="2531.5" y="549" width="34" height="2.2" fill="#6A9955" fill-opacity="0.45"/>
<rect x="2567.5" y="549" width="12" height="2.2" fill="#6A9955" fill-opacity="0.45"/>
<rect x="2581.5" y="549" width="12" height="2.2" fill="#6A9955" fill-opacity="0.45"/>
<rect x="2511.5" y="553" width="4" height="2.2" fill="#6A9955" fill-opacity="0.45"/>
<rect x="2511.5" y="557" width="4" height="2.2" fill="#6A9955" fill-opacity="0.45"/>
<rect x="2517.5" y="557" width="6" height="2.2" fill="#6A9955" fill-opacity="0.45"/>
<rect x="2525.5" y="557" width="14" height="2.2" fill="#6A9955" fill-opacity="0.45"/>
<rect x="2541.5" y="557" width="18" height="2.2" fill="#6A9955" fill-opacity="0.45"/>
<rect x="2561.5" y="557" width="6" height="2.2" fill="#6A9955" fill-opacity="0.45"/>
<rect x="2569.5" y="557" width="8" height="2.2" fill="#6A9955" fill-opacity="0.45"/>
<rect x="2579.5" y="557" width="18" height="2.2" fill="#6A9955" fill-opacity="0.45"/>
<rect x="2599.5" y="557" width="4" height="2.2" fill="#6A9955" fill-opacity="0.45"/>
<rect x="2605.5" y="557" width="8" height="2.2" fill="#6A9955" fill-opacity="0.45"/>
<rect x="2615.5" y="557" width="18" height="2.2" fill="#6A9955" fill-opacity="0.45"/>
<rect x="2635.5" y="557" width="10" height="2.2" fill="#6A9955" fill-opacity="0.45"/>
<rect x="2647.5" y="557" width="14" height="2.2" fill="#6A9955" fill-opacity="0.45"/>
<rect x="2511.5" y="561" width="4" height="2.2" fill="#6A9955" fill-opacity="0.45"/>
<rect x="2517.5" y="561" width="10" height="2.2" fill="#6A9955" fill-opacity="0.45"/>
<rect x="2529.5" y="561" width="4" height="2.2" fill="#6A9955" fill-opacity="0.45"/>
<rect x="2535.5" y="561" width="8" height="2.2" fill="#6A9955" fill-opacity="0.45"/>
<rect x="2545.5" y="561" width="6" height="2.2" fill="#6A9955" fill-opacity="0.45"/>
<rect x="2553.5" y="561" width="6" height="2.2" fill="#6A9955" fill-opacity="0.45"/>
<rect x="2561.5" y="561" width="8" height="2.2" fill="#6A9955" fill-opacity="0.45"/>
<rect x="2571.5" y="561" width="14" height="2.2" fill="#6A9955" fill-opacity="0.45"/>
<rect x="2587.5" y="561" width="16" height="2.2" fill="#6A9955" fill-opacity="0.45"/>
<rect x="2605.5" y="561" width="8" height="2.2" fill="#6A9955" fill-opacity="0.45"/>
<rect x="2615.5" y="561" width="10" height="2.2" fill="#6A9955" fill-opacity="0.45"/>
<rect x="2627.5" y="561" width="16" height="2.2" fill="#6A9955" fill-opacity="0.45"/>
<rect x="2645.5" y="561" width="12" height="2.2" fill="#6A9955" fill-opacity="0.45"/>
<rect x="2511.5" y="565" width="4" height="2.2" fill="#6A9955" fill-opacity="0.45"/>
<rect x="2517.5" y="565" width="8" height="2.2" fill="#6A9955" fill-opacity="0.45"/>
<rect x="2527.5" y="565" width="12" height="2.2" fill="#6A9955" fill-opacity="0.45"/>
<rect x="2541.5" y="565" width="4" height="2.2" fill="#6A9955" fill-opacity="0.45"/>
<rect x="2547.5" y="565" width="24" height="2.2" fill="#6A9955" fill-opacity="0.45"/>
<rect x="2573.5" y="565" width="12" height="2.2" fill="#6A9955" fill-opacity="0.45"/>
<rect x="2587.5" y="565" width="18" height="2.2" fill="#6A9955" fill-opacity="0.45"/>
<rect x="2607.5" y="565" width="4" height="2.2" fill="#6A9955" fill-opacity="0.45"/>
<rect x="2613.5" y="565" width="16" height="2.2" fill="#6A9955" fill-opacity="0.45"/>
<rect x="2511.5" y="569" width="12" height="2.2" fill="#C586C0" fill-opacity="0.45"/>
<rect x="2525.5" y="569" width="16" height="2.2" fill="#4EC9B0" fill-opacity="0.45"/>
<rect x="2541.5" y="569" width="2" height="2.2" fill="#179FFF" fill-opacity="0.45"/>
<rect x="2515.5" y="573" width="12" height="2.2" fill="#9CDCFE" fill-opacity="0.45"/>
<rect x="2527.5" y="573" width="2" height="2.2" fill="#CCCCCC" fill-opacity="0.45"/>
<rect x="2531.5" y="573" width="12" height="2.2" fill="#4EC9B0" fill-opacity="0.45"/>
<rect x="2543.5" y="573" width="2" height="2.2" fill="#FFD700" fill-opacity="0.45"/>
<rect x="2519.5" y="577" width="4" height="2.2" fill="#6A9955" fill-opacity="0.45"/>
<rect x="2525.5" y="577" width="6" height="2.2" fill="#6A9955" fill-opacity="0.45"/>
<rect x="2533.5" y="577" width="10" height="2.2" fill="#6A9955" fill-opacity="0.45"/>
<rect x="2545.5" y="577" width="6" height="2.2" fill="#6A9955" fill-opacity="0.45"/>
<rect x="2553.5" y="577" width="16" height="2.2" fill="#6A9955" fill-opacity="0.45"/>
<rect x="2571.5" y="577" width="6" height="2.2" fill="#6A9955" fill-opacity="0.45"/>
<rect x="2579.5" y="577" width="10" height="2.2" fill="#6A9955" fill-opacity="0.45"/>
<rect x="2591.5" y="577" width="8" height="2.2" fill="#6A9955" fill-opacity="0.45"/>
<rect x="2601.5" y="577" width="4" height="2.2" fill="#6A9955" fill-opacity="0.45"/>
<rect x="2607.5" y="577" width="2" height="2.2" fill="#6A9955" fill-opacity="0.45"/>
<rect x="2611.5" y="577" width="16" height="2.2" fill="#6A9955" fill-opacity="0.45"/>
<rect x="2629.5" y="577" width="10" height="2.2" fill="#6A9955" fill-opacity="0.45"/>
<rect x="2641.5" y="577" width="6" height="2.2" fill="#6A9955" fill-opacity="0.45"/>
<rect x="2519.5" y="581" width="4" height="2.2" fill="#6A9955" fill-opacity="0.45"/>
<rect x="2525.5" y="581" width="26" height="2.2" fill="#6A9955" fill-opacity="0.45"/>
<rect x="2553.5" y="581" width="18" height="2.2" fill="#6A9955" fill-opacity="0.45"/>
<rect x="2573.5" y="581" width="6" height="2.2" fill="#6A9955" fill-opacity="0.45"/>
<rect x="2581.5" y="581" width="14" height="2.2" fill="#6A9955" fill-opacity="0.45"/>
<rect x="2597.5" y="581" width="2" height="2.2" fill="#6A9955" fill-opacity="0.45"/>
<rect x="2601.5" y="581" width="6" height="2.2" fill="#6A9955" fill-opacity="0.45"/>
<rect x="2609.5" y="581" width="12" height="2.2" fill="#6A9955" fill-opacity="0.45"/>
<rect x="2623.5" y="581" width="4" height="2.2" fill="#6A9955" fill-opacity="0.45"/>
<rect x="2629.5" y="581" width="6" height="2.2" fill="#6A9955" fill-opacity="0.45"/>
<rect x="2637.5" y="581" width="6" height="2.2" fill="#6A9955" fill-opacity="0.45"/>
<rect x="2645.5" y="581" width="12" height="2.2" fill="#6A9955" fill-opacity="0.45"/>
<rect x="2519.5" y="585" width="4" height="2.2" fill="#6A9955" fill-opacity="0.45"/>
<rect x="2525.5" y="585" width="12" height="2.2" fill="#6A9955" fill-opacity="0.45"/>
<rect x="2539.5" y="585" width="10" height="2.2" fill="#6A9955" fill-opacity="0.45"/>
<rect x="2551.5" y="585" width="10" height="2.2" fill="#6A9955" fill-opacity="0.45"/>
<rect x="2563.5" y="585" width="6" height="2.2" fill="#6A9955" fill-opacity="0.45"/>
<rect x="2571.5" y="585" width="10" height="2.2" fill="#6A9955" fill-opacity="0.45"/>
<rect x="2583.5" y="585" width="12" height="2.2" fill="#6A9955" fill-opacity="0.45"/>
<rect x="2597.5" y="585" width="8" height="2.2" fill="#6A9955" fill-opacity="0.45"/>
<rect x="2607.5" y="585" width="6" height="2.2" fill="#6A9955" fill-opacity="0.45"/>
<rect x="2615.5" y="585" width="10" height="2.2" fill="#6A9955" fill-opacity="0.45"/>
<rect x="2519.5" y="589" width="30" height="2.2" fill="#9CDCFE" fill-opacity="0.45"/>
<rect x="2549.5" y="589" width="2" height="2.2" fill="#CCCCCC" fill-opacity="0.45"/>
<rect x="2553.5" y="589" width="10" height="2.2" fill="#4EC9B0" fill-opacity="0.45"/>
<rect x="2563.5" y="589" width="2" height="2.2" fill="#CCCCCC" fill-opacity="0.45"/>
<rect x="2565.5" y="589" width="4" height="2.2" fill="#DCDCAA" fill-opacity="0.45"/>
<rect x="2569.5" y="589" width="2" height="2.2" fill="#DA70D6" fill-opacity="0.45"/>
<rect x="2571.5" y="589" width="14" height="2.2" fill="#9CDCFE" fill-opacity="0.45"/>
<rect x="2585.5" y="589" width="2" height="2.2" fill="#DA70D6" fill-opacity="0.45"/>
<rect x="2587.5" y="589" width="2" height="2.2" fill="#CCCCCC" fill-opacity="0.45"/>
<rect x="2589.5" y="589" width="22" height="2.2" fill="#9CDCFE" fill-opacity="0.45"/>
<rect x="2611.5" y="589" width="2" height="2.2" fill="#CCCCCC" fill-opacity="0.45"/>
<rect x="2613.5" y="589" width="28" height="2.2" fill="#9CDCFE" fill-opacity="0.45"/>
<rect x="2641.5" y="589" width="2" height="2.2" fill="#CCCCCC" fill-opacity="0.45"/>
<rect x="2519.5" y="593" width="4" height="2.2" fill="#6A9955" fill-opacity="0.45"/>
<rect x="2525.5" y="593" width="8" height="2.2" fill="#6A9955" fill-opacity="0.45"/>
<rect x="2535.5" y="593" width="4" height="2.2" fill="#6A9955" fill-opacity="0.45"/>
<rect x="2541.5" y="593" width="8" height="2.2" fill="#6A9955" fill-opacity="0.45"/>
<rect x="2551.5" y="593" width="6" height="2.2" fill="#6A9955" fill-opacity="0.45"/>
<rect x="2559.5" y="593" width="10" height="2.2" fill="#6A9955" fill-opacity="0.45"/>
<rect x="2571.5" y="593" width="8" height="2.2" fill="#6A9955" fill-opacity="0.45"/>
<rect x="2581.5" y="593" width="6" height="2.2" fill="#6A9955" fill-opacity="0.45"/>
<rect x="2589.5" y="593" width="20" height="2.2" fill="#6A9955" fill-opacity="0.45"/>
<rect x="2611.5" y="593" width="12" height="2.2" fill="#6A9955" fill-opacity="0.45"/>
<rect x="2625.5" y="593" width="8" height="2.2" fill="#6A9955" fill-opacity="0.45"/>
<rect x="2635.5" y="593" width="6" height="2.2" fill="#6A9955" fill-opacity="0.45"/>
<rect x="2643.5" y="593" width="14" height="2.2" fill="#6A9955" fill-opacity="0.45"/>
<rect x="2659.5" y="593" width="4" height="2.2" fill="#6A9955" fill-opacity="0.45"/>
<rect x="2519.5" y="597" width="4" height="2.2" fill="#6A9955" fill-opacity="0.45"/>
<rect x="2525.5" y="597" width="6" height="2.2" fill="#6A9955" fill-opacity="0.45"/>
<rect x="2533.5" y="597" width="18" height="2.2" fill="#6A9955" fill-opacity="0.45"/>
<rect x="2553.5" y="597" width="14" height="2.2" fill="#6A9955" fill-opacity="0.45"/>
<rect x="2569.5" y="597" width="6" height="2.2" fill="#6A9955" fill-opacity="0.45"/>
<rect x="2577.5" y="597" width="6" height="2.2" fill="#6A9955" fill-opacity="0.45"/>
<rect x="2585.5" y="597" width="4" height="2.2" fill="#6A9955" fill-opacity="0.45"/>
<rect x="2591.5" y="597" width="4" height="2.2" fill="#6A9955" fill-opacity="0.45"/>
<rect x="2597.5" y="597" width="6" height="2.2" fill="#6A9955" fill-opacity="0.45"/>
<rect x="2605.5" y="597" width="6" height="2.2" fill="#6A9955" fill-opacity="0.45"/>
<rect x="2613.5" y="597" width="12" height="2.2" fill="#6A9955" fill-opacity="0.45"/>
<rect x="2627.5" y="597" width="12" height="2.2" fill="#6A9955" fill-opacity="0.45"/>
<rect x="2519.5" y="601" width="10" height="2.2" fill="#9CDCFE" fill-opacity="0.45"/>
<rect x="2529.5" y="601" width="2" height="2.2" fill="#CCCCCC" fill-opacity="0.45"/>
<rect x="2533.5" y="601" width="8" height="2.2" fill="#4EC9B0" fill-opacity="0.45"/>
<rect x="2541.5" y="601" width="2" height="2.2" fill="#DA70D6" fill-opacity="0.45"/>
<rect x="2543.5" y="601" width="12" height="2.2" fill="#9CDCFE" fill-opacity="0.45"/>
<rect x="2555.5" y="601" width="2" height="2.2" fill="#CCCCCC" fill-opacity="0.45"/>
<rect x="2557.5" y="601" width="10" height="2.2" fill="#9CDCFE" fill-opacity="0.45"/>
<rect x="2567.5" y="601" width="2" height="2.2" fill="#DA70D6" fill-opacity="0.45"/>
<rect x="2569.5" y="601" width="2" height="2.2" fill="#CCCCCC" fill-opacity="0.45"/>
<rect x="2515.5" y="605" width="2" height="2.2" fill="#FFD700" fill-opacity="0.45"/>
<rect x="2517.5" y="605" width="2" height="2.2" fill="#CCCCCC" fill-opacity="0.45"/>
<rect x="2515.5" y="609" width="8" height="2.2" fill="#9CDCFE" fill-opacity="0.45"/>
<rect x="2523.5" y="609" width="2" height="2.2" fill="#CCCCCC" fill-opacity="0.45"/>
<rect x="2527.5" y="609" width="12" height="2.2" fill="#4EC9B0" fill-opacity="0.45"/>
<rect x="2539.5" y="609" width="2" height="2.2" fill="#FFD700" fill-opacity="0.45"/>
<rect x="2519.5" y="613" width="4" height="2.2" fill="#6A9955" fill-opacity="0.45"/>
<rect x="2525.5" y="613" width="12" height="2.2" fill="#6A9955" fill-opacity="0.45"/>
<rect x="2539.5" y="613" width="4" height="2.2" fill="#6A9955" fill-opacity="0.45"/>
<rect x="2545.5" y="613" width="2" height="2.2" fill="#6A9955" fill-opacity="0.45"/>
<rect x="2549.5" y="613" width="12" height="2.2" fill="#6A9955" fill-opacity="0.45"/>
<rect x="2563.5" y="613" width="14" height="2.2" fill="#6A9955" fill-opacity="0.45"/>
<rect x="2579.5" y="613" width="4" height="2.2" fill="#6A9955" fill-opacity="0.45"/>
<rect x="2585.5" y="613" width="10" height="2.2" fill="#6A9955" fill-opacity="0.45"/>
<rect x="2597.5" y="613" width="2" height="2.2" fill="#6A9955" fill-opacity="0.45"/>
<rect x="2601.5" y="613" width="12" height="2.2" fill="#6A9955" fill-opacity="0.45"/>
<rect x="2615.5" y="613" width="10" height="2.2" fill="#6A9955" fill-opacity="0.45"/>
<rect x="2627.5" y="613" width="6" height="2.2" fill="#6A9955" fill-opacity="0.45"/>
<rect x="2635.5" y="613" width="18" height="2.2" fill="#6A9955" fill-opacity="0.45"/>
<rect x="2655.5" y="613" width="4" height="2.2" fill="#6A9955" fill-opacity="0.45"/>
<rect x="2519.5" y="617" width="4" height="2.2" fill="#6A9955" fill-opacity="0.45"/>
<rect x="2525.5" y="617" width="4" height="2.2" fill="#6A9955" fill-opacity="0.45"/>
<rect x="2531.5" y="617" width="6" height="2.2" fill="#6A9955" fill-opacity="0.45"/>
<rect x="2539.5" y="617" width="12" height="2.2" fill="#6A9955" fill-opacity="0.45"/>
<rect x="2553.5" y="617" width="4" height="2.2" fill="#6A9955" fill-opacity="0.45"/>
<rect x="2559.5" y="617" width="6" height="2.2" fill="#6A9955" fill-opacity="0.45"/>
<rect x="2567.5" y="617" width="14" height="2.2" fill="#6A9955" fill-opacity="0.45"/>
<rect x="2519.5" y="621" width="10" height="2.2" fill="#9CDCFE" fill-opacity="0.45"/>
<rect x="2529.5" y="621" width="2" height="2.2" fill="#CCCCCC" fill-opacity="0.45"/>
<rect x="2533.5" y="621" width="12" height="2.2" fill="#4EC9B0" fill-opacity="0.45"/>
<rect x="2545.5" y="621" width="2" height="2.2" fill="#DA70D6" fill-opacity="0.45"/>
<rect x="2523.5" y="625" width="4" height="2.2" fill="#6A9955" fill-opacity="0.45"/>
<rect x="2529.5" y="625" width="12" height="2.2" fill="#6A9955" fill-opacity="0.45"/>
<rect x="2543.5" y="625" width="4" height="2.2" fill="#6A9955" fill-opacity="0.45"/>
<rect x="2549.5" y="625" width="8" height="2.2" fill="#6A9955" fill-opacity="0.45"/>
<rect x="2559.5" y="625" width="2" height="2.2" fill="#6A9955" fill-opacity="0.45"/>
<rect x="2563.5" y="625" width="12" height="2.2" fill="#6A9955" fill-opacity="0.45"/>
<rect x="2577.5" y="625" width="14" height="2.2" fill="#6A9955" fill-opacity="0.45"/>
<rect x="2593.5" y="625" width="4" height="2.2" fill="#6A9955" fill-opacity="0.45"/>
<rect x="2599.5" y="625" width="10" height="2.2" fill="#6A9955" fill-opacity="0.45"/>
<rect x="2611.5" y="625" width="2" height="2.2" fill="#6A9955" fill-opacity="0.45"/>
<rect x="2615.5" y="625" width="8" height="2.2" fill="#6A9955" fill-opacity="0.45"/>
<rect x="2625.5" y="625" width="4" height="2.2" fill="#6A9955" fill-opacity="0.45"/>
<rect x="2631.5" y="625" width="16" height="2.2" fill="#6A9955" fill-opacity="0.45"/>
<rect x="2649.5" y="625" width="6" height="2.2" fill="#6A9955" fill-opacity="0.45"/>
<rect x="2523.5" y="629" width="4" height="2.2" fill="#6A9955" fill-opacity="0.45"/>
<rect x="2529.5" y="629" width="16" height="2.2" fill="#6A9955" fill-opacity="0.45"/>
<rect x="2547.5" y="629" width="8" height="2.2" fill="#6A9955" fill-opacity="0.45"/>
<rect x="2557.5" y="629" width="22" height="2.2" fill="#6A9955" fill-opacity="0.45"/>
<rect x="2581.5" y="629" width="4" height="2.2" fill="#6A9955" fill-opacity="0.45"/>
<rect x="2587.5" y="629" width="16" height="2.2" fill="#6A9955" fill-opacity="0.45"/>
<rect x="2605.5" y="629" width="4" height="2.2" fill="#6A9955" fill-opacity="0.45"/>
<rect x="2611.5" y="629" width="10" height="2.2" fill="#6A9955" fill-opacity="0.45"/>
<rect x="2623.5" y="629" width="12" height="2.2" fill="#6A9955" fill-opacity="0.45"/>
<rect x="2637.5" y="629" width="4" height="2.2" fill="#6A9955" fill-opacity="0.45"/>
<rect x="2643.5" y="629" width="6" height="2.2" fill="#6A9955" fill-opacity="0.45"/>
<rect x="2651.5" y="629" width="6" height="2.2" fill="#6A9955" fill-opacity="0.45"/>
<rect x="2523.5" y="633" width="4" height="2.2" fill="#6A9955" fill-opacity="0.45"/>
<rect x="2529.5" y="633" width="16" height="2.2" fill="#6A9955" fill-opacity="0.45"/>
<rect x="2547.5" y="633" width="26" height="2.2" fill="#6A9955" fill-opacity="0.45"/>
<rect x="2575.5" y="633" width="6" height="2.2" fill="#6A9955" fill-opacity="0.45"/>
<rect x="2583.5" y="633" width="10" height="2.2" fill="#6A9955" fill-opacity="0.45"/>
<rect x="2595.5" y="633" width="4" height="2.2" fill="#6A9955" fill-opacity="0.45"/>
<rect x="2601.5" y="633" width="4" height="2.2" fill="#6A9955" fill-opacity="0.45"/>
<rect x="2607.5" y="633" width="4" height="2.2" fill="#6A9955" fill-opacity="0.45"/>
<rect x="2613.5" y="633" width="8" height="2.2" fill="#6A9955" fill-opacity="0.45"/>
<rect x="2623.5" y="633" width="4" height="2.2" fill="#6A9955" fill-opacity="0.45"/>
<rect x="2629.5" y="633" width="6" height="2.2" fill="#6A9955" fill-opacity="0.45"/>
<rect x="2637.5" y="633" width="14" height="2.2" fill="#6A9955" fill-opacity="0.45"/>
<rect x="2523.5" y="637" width="4" height="2.2" fill="#6A9955" fill-opacity="0.45"/>
<rect x="2523.5" y="641" width="4" height="2.2" fill="#6A9955" fill-opacity="0.45"/>
<rect x="2529.5" y="641" width="12" height="2.2" fill="#6A9955" fill-opacity="0.45"/>
<rect x="2543.5" y="641" width="6" height="2.2" fill="#6A9955" fill-opacity="0.45"/>
<rect x="2551.5" y="641" width="14" height="2.2" fill="#6A9955" fill-opacity="0.45"/>
<rect x="2567.5" y="641" width="20" height="2.2" fill="#6A9955" fill-opacity="0.45"/>
<rect x="2589.5" y="641" width="4" height="2.2" fill="#6A9955" fill-opacity="0.45"/>
<rect x="2595.5" y="641" width="14" height="2.2" fill="#6A9955" fill-opacity="0.45"/>
<rect x="2611.5" y="641" width="6" height="2.2" fill="#6A9955" fill-opacity="0.45"/>
<rect x="2619.5" y="641" width="4" height="2.2" fill="#6A9955" fill-opacity="0.45"/>
<rect x="2625.5" y="641" width="10" height="2.2" fill="#6A9955" fill-opacity="0.45"/>
<rect x="2637.5" y="641" width="12" height="2.2" fill="#6A9955" fill-opacity="0.45"/>
<rect x="2651.5" y="641" width="6" height="2.2" fill="#6A9955" fill-opacity="0.45"/>
<rect x="2523.5" y="645" width="4" height="2.2" fill="#6A9955" fill-opacity="0.45"/>
<rect x="2529.5" y="645" width="6" height="2.2" fill="#6A9955" fill-opacity="0.45"/>
<rect x="2537.5" y="645" width="4" height="2.2" fill="#6A9955" fill-opacity="0.45"/>
<rect x="2543.5" y="645" width="18" height="2.2" fill="#6A9955" fill-opacity="0.45"/>
<rect x="2563.5" y="645" width="6" height="2.2" fill="#6A9955" fill-opacity="0.45"/>
<rect x="2571.5" y="645" width="18" height="2.2" fill="#6A9955" fill-opacity="0.45"/>
<rect x="2591.5" y="645" width="8" height="2.2" fill="#6A9955" fill-opacity="0.45"/>
<rect x="2601.5" y="645" width="4" height="2.2" fill="#6A9955" fill-opacity="0.45"/>
<rect x="2607.5" y="645" width="6" height="2.2" fill="#6A9955" fill-opacity="0.45"/>
<rect x="2615.5" y="645" width="34" height="2.2" fill="#6A9955" fill-opacity="0.45"/>
<rect x="2651.5" y="645" width="4" height="2.2" fill="#6A9955" fill-opacity="0.45"/>
<rect x="2523.5" y="649" width="4" height="2.2" fill="#6A9955" fill-opacity="0.45"/>
<rect x="2529.5" y="649" width="12" height="2.2" fill="#6A9955" fill-opacity="0.45"/>
<rect x="2543.5" y="649" width="6" height="2.2" fill="#6A9955" fill-opacity="0.45"/>
<rect x="2551.5" y="649" width="16" height="2.2" fill="#6A9955" fill-opacity="0.45"/>
<rect x="2569.5" y="649" width="22" height="2.2" fill="#6A9955" fill-opacity="0.45"/>
<rect x="2593.5" y="649" width="6" height="2.2" fill="#6A9955" fill-opacity="0.45"/>
<rect x="2601.5" y="649" width="8" height="2.2" fill="#6A9955" fill-opacity="0.45"/>
<rect x="2611.5" y="649" width="8" height="2.2" fill="#6A9955" fill-opacity="0.45"/>
<rect x="2621.5" y="649" width="8" height="2.2" fill="#6A9955" fill-opacity="0.45"/>
<rect x="2631.5" y="649" width="4" height="2.2" fill="#6A9955" fill-opacity="0.45"/>
<rect x="2637.5" y="649" width="6" height="2.2" fill="#6A9955" fill-opacity="0.45"/>
<rect x="2645.5" y="649" width="16" height="2.2" fill="#6A9955" fill-opacity="0.45"/>
<rect x="2523.5" y="653" width="4" height="2.2" fill="#6A9955" fill-opacity="0.45"/>
<rect x="2529.5" y="653" width="8" height="2.2" fill="#6A9955" fill-opacity="0.45"/>
<rect x="2539.5" y="653" width="14" height="2.2" fill="#6A9955" fill-opacity="0.45"/>
<rect x="2555.5" y="653" width="14" height="2.2" fill="#6A9955" fill-opacity="0.45"/>
<rect x="2571.5" y="653" width="6" height="2.2" fill="#6A9955" fill-opacity="0.45"/>
<rect x="2579.5" y="653" width="16" height="2.2" fill="#6A9955" fill-opacity="0.45"/>
<rect x="2597.5" y="653" width="8" height="2.2" fill="#6A9955" fill-opacity="0.45"/>
<rect x="2607.5" y="653" width="10" height="2.2" fill="#6A9955" fill-opacity="0.45"/>
<rect x="2619.5" y="653" width="8" height="2.2" fill="#6A9955" fill-opacity="0.45"/>
<rect x="2629.5" y="653" width="10" height="2.2" fill="#6A9955" fill-opacity="0.45"/>
<rect x="2641.5" y="653" width="4" height="2.2" fill="#6A9955" fill-opacity="0.45"/>
<rect x="2523.5" y="657" width="4" height="2.2" fill="#6A9955" fill-opacity="0.45"/>
<rect x="2529.5" y="657" width="24" height="2.2" fill="#6A9955" fill-opacity="0.45"/>
<rect x="2523.5" y="661" width="4" height="2.2" fill="#6A9955" fill-opacity="0.45"/>
<rect x="2523.5" y="665" width="4" height="2.2" fill="#6A9955" fill-opacity="0.45"/>
<rect x="2529.5" y="665" width="6" height="2.2" fill="#6A9955" fill-opacity="0.45"/>
<rect x="2537.5" y="665" width="10" height="2.2" fill="#6A9955" fill-opacity="0.45"/>
<rect x="2549.5" y="665" width="12" height="2.2" fill="#6A9955" fill-opacity="0.45"/>
<rect x="2563.5" y="665" width="12" height="2.2" fill="#6A9955" fill-opacity="0.45"/>
<rect x="2577.5" y="665" width="18" height="2.2" fill="#6A9955" fill-opacity="0.45"/>
<rect x="2597.5" y="665" width="14" height="2.2" fill="#6A9955" fill-opacity="0.45"/>
<rect x="2613.5" y="665" width="6" height="2.2" fill="#6A9955" fill-opacity="0.45"/>
<rect x="2621.5" y="665" width="14" height="2.2" fill="#6A9955" fill-opacity="0.45"/>
<rect x="2637.5" y="665" width="10" height="2.2" fill="#6A9955" fill-opacity="0.45"/>
<rect x="2649.5" y="665" width="12" height="2.2" fill="#6A9955" fill-opacity="0.45"/>
<rect x="2523.5" y="669" width="4" height="2.2" fill="#6A9955" fill-opacity="0.45"/>
<rect x="2529.5" y="669" width="12" height="2.2" fill="#6A9955" fill-opacity="0.45"/>
<rect x="2543.5" y="669" width="4" height="2.2" fill="#6A9955" fill-opacity="0.45"/>
<rect x="2549.5" y="669" width="6" height="2.2" fill="#6A9955" fill-opacity="0.45"/>
<rect x="2557.5" y="669" width="8" height="2.2" fill="#6A9955" fill-opacity="0.45"/>
<rect x="2567.5" y="669" width="4" height="2.2" fill="#6A9955" fill-opacity="0.45"/>
<rect x="2573.5" y="669" width="10" height="2.2" fill="#6A9955" fill-opacity="0.45"/>
<rect x="2585.5" y="669" width="6" height="2.2" fill="#6A9955" fill-opacity="0.45"/>
<rect x="2593.5" y="669" width="4" height="2.2" fill="#6A9955" fill-opacity="0.45"/>
<rect x="2599.5" y="669" width="6" height="2.2" fill="#6A9955" fill-opacity="0.45"/>
<rect x="2607.5" y="669" width="18" height="2.2" fill="#6A9955" fill-opacity="0.45"/>
<rect x="2627.5" y="669" width="4" height="2.2" fill="#6A9955" fill-opacity="0.45"/>
<rect x="2633.5" y="669" width="6" height="2.2" fill="#6A9955" fill-opacity="0.45"/>
<rect x="2641.5" y="669" width="6" height="2.2" fill="#6A9955" fill-opacity="0.45"/>
<rect x="2523.5" y="673" width="4" height="2.2" fill="#6A9955" fill-opacity="0.45"/>
<rect x="2529.5" y="673" width="18" height="2.2" fill="#6A9955" fill-opacity="0.45"/>
<rect x="2549.5" y="673" width="6" height="2.2" fill="#6A9955" fill-opacity="0.45"/>
<rect x="2557.5" y="673" width="8" height="2.2" fill="#6A9955" fill-opacity="0.45"/>
<rect x="2567.5" y="673" width="14" height="2.2" fill="#6A9955" fill-opacity="0.45"/>
<rect x="2523.5" y="677" width="34" height="2.2" fill="#9CDCFE" fill-opacity="0.45"/>
<rect x="2557.5" y="677" width="2" height="2.2" fill="#CCCCCC" fill-opacity="0.45"/>
<rect x="2561.5" y="677" width="34" height="2.2" fill="#4EC9B0" fill-opacity="0.45"/>
<rect x="2595.5" y="677" width="2" height="2.2" fill="#CCCCCC" fill-opacity="0.45"/>
<rect x="2597.5" y="677" width="12" height="2.2" fill="#9CDCFE" fill-opacity="0.45"/>
<rect x="2609.5" y="677" width="2" height="2.2" fill="#CCCCCC" fill-opacity="0.45"/>
<rect x="2523.5" y="681" width="16" height="2.2" fill="#9CDCFE" fill-opacity="0.45"/>
<rect x="2539.5" y="681" width="2" height="2.2" fill="#CCCCCC" fill-opacity="0.45"/>
<rect x="2543.5" y="681" width="2" height="2.2" fill="#CCCCCC" fill-opacity="0.45"/>
<rect x="2545.5" y="681" width="12" height="2.2" fill="#4EC9B0" fill-opacity="0.45"/>
<rect x="2557.5" y="681" width="2" height="2.2" fill="#CCCCCC" fill-opacity="0.45"/>
<rect x="2559.5" y="681" width="2" height="2.2" fill="#179FFF" fill-opacity="0.45"/>
<rect x="2527.5" y="685" width="10" height="2.2" fill="#569CD6" fill-opacity="0.45"/>
<rect x="2539.5" y="685" width="8" height="2.2" fill="#4EC9B0" fill-opacity="0.45"/>
<rect x="2547.5" y="685" width="2" height="2.2" fill="#FFD700" fill-opacity="0.45"/>
<rect x="2531.5" y="689" width="8" height="2.2" fill="#CE9178" fill-opacity="0.45"/>
<rect x="2541.5" y="689" width="8" height="2.2" fill="#CE9178" fill-opacity="0.45"/>
<rect x="2551.5" y="689" width="12" height="2.2" fill="#CE9178" fill-opacity="0.45"/>
<rect x="2565.5" y="689" width="6" height="2.2" fill="#CE9178" fill-opacity="0.45"/>
<rect x="2573.5" y="689" width="12" height="2.2" fill="#CE9178" fill-opacity="0.45"/>
<rect x="2587.5" y="689" width="8" height="2.2" fill="#CE9178" fill-opacity="0.45"/>
<rect x="2597.5" y="689" width="8" height="2.2" fill="#CE9178" fill-opacity="0.45"/>
<rect x="2607.5" y="689" width="14" height="2.2" fill="#CE9178" fill-opacity="0.45"/>
<rect x="2621.5" y="689" width="2" height="2.2" fill="#CCCCCC" fill-opacity="0.45"/>
<rect x="2527.5" y="693" width="2" height="2.2" fill="#FFD700" fill-opacity="0.45"/>
<rect x="2529.5" y="693" width="2" height="2.2" fill="#CCCCCC" fill-opacity="0.45"/>
<rect x="2527.5" y="697" width="8" height="2.2" fill="#4EC9B0" fill-opacity="0.45"/>
<rect x="2535.5" y="697" width="2" height="2.2" fill="#FFD700" fill-opacity="0.45"/>
<rect x="2531.5" y="701" width="22" height="2.2" fill="#CE9178" fill-opacity="0.45"/>
<rect x="2553.5" y="701" width="2" height="2.2" fill="#CCCCCC" fill-opacity="0.45"/>
<rect x="2531.5" y="705" width="10" height="2.2" fill="#9CDCFE" fill-opacity="0.45"/>
<rect x="2541.5" y="705" width="2" height="2.2" fill="#CCCCCC" fill-opacity="0.45"/>
<rect x="2545.5" y="705" width="10" height="2.2" fill="#4EC9B0" fill-opacity="0.45"/>
<rect x="2555.5" y="705" width="2" height="2.2" fill="#CCCCCC" fill-opacity="0.45"/>
<rect x="2557.5" y="705" width="4" height="2.2" fill="#DCDCAA" fill-opacity="0.45"/>
<rect x="2561.5" y="705" width="2" height="2.2" fill="#DA70D6" fill-opacity="0.45"/>
<rect x="2563.5" y="705" width="14" height="2.2" fill="#9CDCFE" fill-opacity="0.45"/>
<rect x="2577.5" y="705" width="2" height="2.2" fill="#DA70D6" fill-opacity="0.45"/>
<rect x="2579.5" y="705" width="2" height="2.2" fill="#CCCCCC" fill-opacity="0.45"/>
<rect x="2581.5" y="705" width="18" height="2.2" fill="#9CDCFE" fill-opacity="0.45"/>
<rect x="2599.5" y="705" width="2" height="2.2" fill="#CCCCCC" fill-opacity="0.45"/>
<rect x="2601.5" y="705" width="28" height="2.2" fill="#9CDCFE" fill-opacity="0.45"/>
<rect x="2629.5" y="705" width="2" height="2.2" fill="#CCCCCC" fill-opacity="0.45"/>
<rect x="2527.5" y="709" width="2" height="2.2" fill="#FFD700" fill-opacity="0.45"/>
<rect x="2529.5" y="709" width="2" height="2.2" fill="#CCCCCC" fill-opacity="0.45"/>
<rect x="2523.5" y="713" width="2" height="2.2" fill="#179FFF" fill-opacity="0.45"/>
<rect x="2525.5" y="713" width="2" height="2.2" fill="#CCCCCC" fill-opacity="0.45"/>
<rect x="2519.5" y="717" width="2" height="2.2" fill="#DA70D6" fill-opacity="0.45"/>
<rect x="2521.5" y="717" width="2" height="2.2" fill="#CCCCCC" fill-opacity="0.45"/>
<rect x="2515.5" y="721" width="2" height="2.2" fill="#FFD700" fill-opacity="0.45"/>
<rect x="2517.5" y="721" width="2" height="2.2" fill="#CCCCCC" fill-opacity="0.45"/>
<rect x="2515.5" y="725" width="40" height="2.2" fill="#9CDCFE" fill-opacity="0.45"/>
<rect x="2555.5" y="725" width="2" height="2.2" fill="#CCCCCC" fill-opacity="0.45"/>
<rect x="2559.5" y="725" width="40" height="2.2" fill="#4EC9B0" fill-opacity="0.45"/>
<rect x="2599.5" y="725" width="2" height="2.2" fill="#FFD700" fill-opacity="0.45"/>
<rect x="2519.5" y="729" width="18" height="2.2" fill="#9CDCFE" fill-opacity="0.45"/>
<rect x="2537.5" y="729" width="2" height="2.2" fill="#CCCCCC" fill-opacity="0.45"/>
<rect x="2541.5" y="729" width="34" height="2.2" fill="#9CDCFE" fill-opacity="0.45"/>
<rect x="2575.5" y="729" width="2" height="2.2" fill="#CCCCCC" fill-opacity="0.45"/>
<rect x="2519.5" y="733" width="14" height="2.2" fill="#9CDCFE" fill-opacity="0.45"/>
<rect x="2533.5" y="733" width="2" height="2.2" fill="#CCCCCC" fill-opacity="0.45"/>
<rect x="2537.5" y="733" width="22" height="2.2" fill="#CE9178" fill-opacity="0.45"/>
<rect x="2559.5" y="733" width="2" height="2.2" fill="#CCCCCC" fill-opacity="0.45"/>
<rect x="2519.5" y="737" width="10" height="2.2" fill="#9CDCFE" fill-opacity="0.45"/>
<rect x="2529.5" y="737" width="2" height="2.2" fill="#CCCCCC" fill-opacity="0.45"/>
<rect x="2533.5" y="737" width="10" height="2.2" fill="#569CD6" fill-opacity="0.45"/>
<rect x="2545.5" y="737" width="8" height="2.2" fill="#4EC9B0" fill-opacity="0.45"/>
<rect x="2553.5" y="737" width="2" height="2.2" fill="#DA70D6" fill-opacity="0.45"/>
<rect x="2555.5" y="737" width="10" height="2.2" fill="#4EC9B0" fill-opacity="0.45"/>
<rect x="2565.5" y="737" width="2" height="2.2" fill="#CCCCCC" fill-opacity="0.45"/>
<rect x="2567.5" y="737" width="6" height="2.2" fill="#9CDCFE" fill-opacity="0.45"/>
<rect x="2573.5" y="737" width="2" height="2.2" fill="#DA70D6" fill-opacity="0.45"/>
<rect x="2575.5" y="737" width="2" height="2.2" fill="#CCCCCC" fill-opacity="0.45"/>
<rect x="2515.5" y="741" width="2" height="2.2" fill="#FFD700" fill-opacity="0.45"/>
<rect x="2517.5" y="741" width="2" height="2.2" fill="#CCCCCC" fill-opacity="0.45"/>
<rect x="2521.5" y="741" width="4" height="2.2" fill="#6A9955" fill-opacity="0.45"/>
<rect x="2527.5" y="741" width="8" height="2.2" fill="#6A9955" fill-opacity="0.45"/>
<rect x="2537.5" y="741" width="16" height="2.2" fill="#6A9955" fill-opacity="0.45"/>
<rect x="2555.5" y="741" width="10" height="2.2" fill="#6A9955" fill-opacity="0.45"/>
<rect x="2567.5" y="741" width="10" height="2.2" fill="#6A9955" fill-opacity="0.45"/>
<rect x="2579.5" y="741" width="30" height="2.2" fill="#6A9955" fill-opacity="0.45"/>
<rect x="2611.5" y="741" width="10" height="2.2" fill="#6A9955" fill-opacity="0.45"/>
<rect x="2623.5" y="741" width="6" height="2.2" fill="#6A9955" fill-opacity="0.45"/>
<rect x="2631.5" y="741" width="10" height="2.2" fill="#6A9955" fill-opacity="0.45"/>
<rect x="2643.5" y="741" width="16" height="2.2" fill="#6A9955" fill-opacity="0.45"/>
<rect x="2511.5" y="745" width="2" height="2.2" fill="#179FFF" fill-opacity="0.45"/>
<rect x="2513.5" y="745" width="2" height="2.2" fill="#CCCCCC" fill-opacity="0.45"/>
<rect x="2507.5" y="749" width="2" height="2.2" fill="#DA70D6" fill-opacity="0.45"/>
<rect x="2503.5" y="753" width="2" height="2.2" fill="#FFD700" fill-opacity="0.45"/>
<circle cx="1593.5" cy="1600" r="2.1" fill="#CCCCCC"/>
<circle cx="1603.5" cy="1600" r="2.1" fill="#CCCCCC"/>
<circle cx="1613.5" cy="1600" r="2.1" fill="#CCCCCC"/>
<circle cx="2537.5" cy="1596.2" r="8.8" stroke="#CCCCCC" stroke-width="2" fill="none"/>
<path d="M2531.2,1602.8 L2518.8,1615.8" stroke="#CCCCCC" stroke-width="2.2" fill="none" stroke-linecap="round" stroke-linejoin="round" stroke-linecap="butt"/>
<path d="M2566,1591.5 H2594.5 M2566,1597 H2594.5 M2566,1603 H2579 M2566,1609 H2579" stroke="#CCCCCC" stroke-width="2" fill="none" stroke-linecap="round" stroke-linejoin="round" stroke-linecap="butt"/>
<path d="M2583,1601.5 L2593.5,1611 M2593.5,1601.5 L2583,1611" stroke="#CCCCCC" stroke-width="2" fill="none" stroke-linecap="round" stroke-linejoin="round" stroke-linecap="butt"/>
<path d="M2620.5,1604.8 L2630,1595 L2639.5,1604.8" stroke="#CCCCCC" stroke-width="2" fill="none" stroke-linecap="round" stroke-linejoin="round" stroke-linecap="butt" stroke-linejoin="miter"/>
<path d="M2673.5,1591.5 L2690.5,1608.5 M2690.5,1591.5 L2673.5,1608.5" stroke="#CCCCCC" stroke-width="2" fill="none" stroke-linecap="round" stroke-linejoin="round" stroke-linecap="butt"/>
<path d="M1043.5,1899.5 L1053.2,1909 L1043.5,1918.5" stroke="#CCCCCC" stroke-width="3" fill="none" stroke-linecap="round" stroke-linejoin="round" stroke-linecap="butt" stroke-linejoin="miter"/>
<path d="M137.5,1941 L145.5,1948.7 L137.5,1956.3 M154,1934.3 L146.5,1941.6 L154,1949.2" stroke="#FFFFFF" stroke-width="2.3" fill="none" stroke-linecap="round" stroke-linejoin="round" stroke-linecap="butt" stroke-linejoin="miter"/>
<circle cx="209.8" cy="1945.8" r="11.3" stroke="#CCCCCC" stroke-width="2" fill="none"/>
<path d="M205,1941 L214.8,1950.8 M214.8,1941 L205,1950.8" stroke="#CCCCCC" stroke-width="2" fill="none" stroke-linecap="round" stroke-linejoin="round" stroke-linecap="butt"/>
<path d="M266.8,1934.8 L277.8,1955.6 H255.8 Z" stroke="#CCCCCC" stroke-width="2" fill="none" stroke-linecap="round" stroke-linejoin="round" stroke-linejoin="miter"/>
<path d="M266.8,1942 V1949.5" stroke="#CCCCCC" stroke-width="2.2" fill="none" stroke-linecap="round" stroke-linejoin="round" stroke-linecap="butt"/>
<path d="M343.8,1944.2 V1936 L360,1946.6 L350.5,1953.2" stroke="#CCCCCC" stroke-width="2" fill="none" stroke-linecap="round" stroke-linejoin="round" stroke-linejoin="miter" stroke-linecap="butt"/>
<ellipse cx="341.3" cy="1953.6" rx="3.7" ry="5.1" stroke="#CCCCCC" stroke-width="2" fill="none"/>
<path d="M334,1948.3 L337.3,1950.8 M348.6,1948.3 L345.3,1950.8 M333.6,1954 H337.3 M345.3,1954 H349 M334,1960 L337.3,1957.4 M348.6,1960 L345.3,1957.4 M337.6,1950.6 H345" stroke="#CCCCCC" stroke-width="1.8" fill="none" stroke-linecap="round" stroke-linejoin="round" stroke-linecap="butt"/>
<path d="M2675.2,1954.2 H2694.6" stroke="#CCCCCC" stroke-width="2.2" fill="none" stroke-linecap="round" stroke-linejoin="round" stroke-linecap="butt"/>
<path d="M2677.2,1953.8 C2678.6,1950 2679.2,1946 2679.5,1942.5 C2680,1937.5 2682.6,1934.6 2686.8,1934.3" stroke="#CCCCCC" stroke-width="2" fill="none" stroke-linecap="round" stroke-linejoin="round" stroke-linecap="butt"/>
<path d="M2691.8,1946.6 C2692.1,1949.6 2692.9,1952 2694,1953.9" stroke="#CCCCCC" stroke-width="2" fill="none" stroke-linecap="round" stroke-linejoin="round" stroke-linecap="butt"/>
<circle cx="2691" cy="1939.1" r="5.3" fill="#CCCCCC"/>
<path d="M2680.6,1955.6 A3.2,3.2 0 0 0 2687,1955.6 Z" fill="#CCCCCC" />
</svg>
</div><div id="bord"></div></body></html>
